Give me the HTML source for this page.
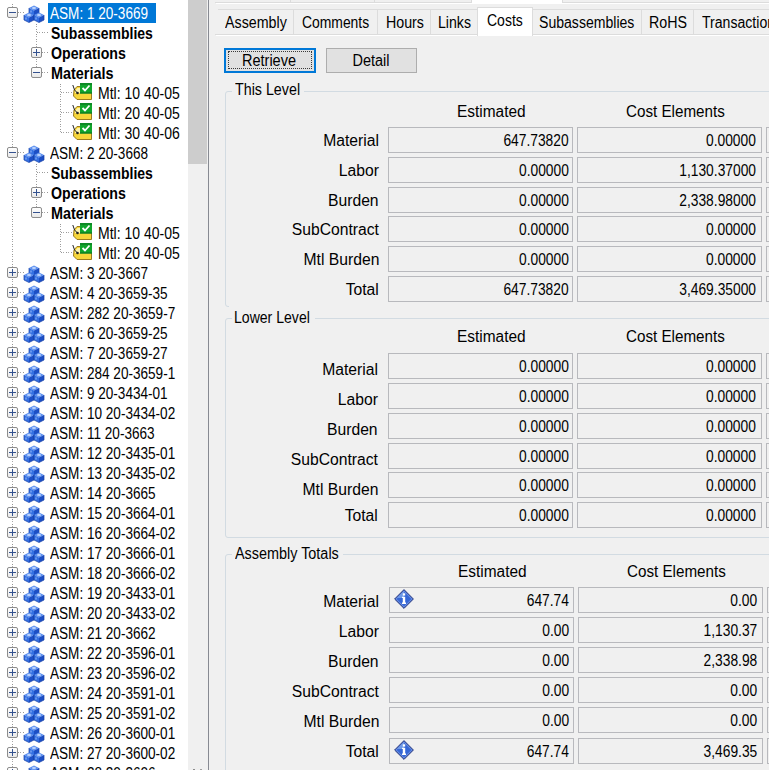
<!DOCTYPE html><html><head><meta charset="utf-8"><style>
html,body{margin:0;padding:0;}
body{width:769px;height:770px;overflow:hidden;position:relative;background:#f0f0f0;font-family:"Liberation Sans", sans-serif;color:#000;}
.t{position:absolute;line-height:20px;white-space:nowrap;}
.a{position:absolute;}
svg{position:absolute;overflow:visible;}
</style></head><body>
<div style="position:absolute;left:0px;top:0px;width:188px;height:770px;background:#fff"></div>
<div class="a" style="left:12px;top:4px;width:1px;height:767px;background:repeating-linear-gradient(to bottom,#969696 0,#969696 1px,transparent 1px,transparent 2px,#a8a8a8 2px,#a8a8a8 3px,transparent 3px,transparent 5px)"></div>
<div class="a" style="left:36px;top:24px;width:1px;height:49px;background:repeating-linear-gradient(to bottom,#969696 0,#969696 1px,transparent 1px,transparent 2px,#a8a8a8 2px,#a8a8a8 3px,transparent 3px,transparent 5px)"></div>
<div class="a" style="left:60px;top:84px;width:1px;height:49px;background:repeating-linear-gradient(to bottom,#969696 0,#969696 1px,transparent 1px,transparent 2px,#a8a8a8 2px,#a8a8a8 3px,transparent 3px,transparent 5px)"></div>
<div class="a" style="left:36px;top:164px;width:1px;height:49px;background:repeating-linear-gradient(to bottom,#969696 0,#969696 1px,transparent 1px,transparent 2px,#a8a8a8 2px,#a8a8a8 3px,transparent 3px,transparent 5px)"></div>
<div class="a" style="left:60px;top:224px;width:1px;height:29px;background:repeating-linear-gradient(to bottom,#969696 0,#969696 1px,transparent 1px,transparent 2px,#a8a8a8 2px,#a8a8a8 3px,transparent 3px,transparent 5px)"></div>
<div style="position:absolute;left:7px;top:7px;width:11px;height:11px;background:#fff"></div>
<div class="a" style="left:18px;top:12px;width:6px;height:1px;background:repeating-linear-gradient(to right,#969696 0,#969696 1px,transparent 1px,transparent 2px,#a8a8a8 2px,#a8a8a8 3px,transparent 3px,transparent 5px)"></div>
<div class="a" style="left:7px;top:7px;width:9px;height:9px;border:1px solid #8c8c8c;border-radius:2px;background:linear-gradient(#ffffff,#e8e8e8)"></div>
<div style="position:absolute;left:9px;top:12px;width:7px;height:1px;background:#34528f"></div>
<svg style="left:24px;top:5px" width="20" height="18" viewBox="0 0 20 18"><path d="M10 0.5 L15 3.0 L10 5.5 L5 3.0Z" fill="#5b8ff0"/><path d="M5 3.0 L10 5.5 L10 10.5 L5 8.0Z" fill="#3470e2"/><path d="M15 3.0 L10 5.5 L10 10.5 L15 8.0Z" fill="#1c4fc6"/><path d="M5 3.0 L5 8.0 L10 10.5 L15 8.0 L15 3.0" fill="none" stroke="#1740a6" stroke-width="0.7"/><path d="M8 3.0 L12 3.0 M10 1.8 L10 4.2" stroke="#d8e6ff" stroke-width="1"/><path d="M7 5.5 L7 7.5" stroke="#9dbcf7" stroke-width="1"/><path d="M5 7.5 L10 10.0 L5 12.5 L0 10.0Z" fill="#5b8ff0"/><path d="M0 10.0 L5 12.5 L5 17.5 L0 15.0Z" fill="#3470e2"/><path d="M10 10.0 L5 12.5 L5 17.5 L10 15.0Z" fill="#1c4fc6"/><path d="M0 10.0 L0 15.0 L5 17.5 L10 15.0 L10 10.0" fill="none" stroke="#1740a6" stroke-width="0.7"/><path d="M3 10.0 L7 10.0 M5 8.8 L5 11.2" stroke="#d8e6ff" stroke-width="1"/><path d="M2 12.5 L2 14.5" stroke="#9dbcf7" stroke-width="1"/><path d="M15 7.5 L20 10.0 L15 12.5 L10 10.0Z" fill="#5b8ff0"/><path d="M10 10.0 L15 12.5 L15 17.5 L10 15.0Z" fill="#3470e2"/><path d="M20 10.0 L15 12.5 L15 17.5 L20 15.0Z" fill="#1c4fc6"/><path d="M10 10.0 L10 15.0 L15 17.5 L20 15.0 L20 10.0" fill="none" stroke="#1740a6" stroke-width="0.7"/><path d="M13 10.0 L17 10.0 M15 8.8 L15 11.2" stroke="#d8e6ff" stroke-width="1"/><path d="M12 12.5 L12 14.5" stroke="#9dbcf7" stroke-width="1"/></svg>
<div style="position:absolute;left:48px;top:3px;width:108px;height:20px;background:#0078d7"></div>
<div class="t" style="top:4px;font-size:16px;color:#fff;left:50px;transform:scaleX(0.848);transform-origin:0 0;">ASM: 1 20-3669</div>
<div class="a" style="left:37px;top:32px;width:11px;height:1px;background:repeating-linear-gradient(to right,#969696 0,#969696 1px,transparent 1px,transparent 2px,#a8a8a8 2px,#a8a8a8 3px,transparent 3px,transparent 5px)"></div>
<div class="t" style="top:24px;font-size:16px;font-weight:bold;left:51px;transform:scaleX(0.874);transform-origin:0 0;">Subassemblies</div>
<div style="position:absolute;left:31px;top:47px;width:11px;height:11px;background:#fff"></div>
<div class="a" style="left:42px;top:52px;width:6px;height:1px;background:repeating-linear-gradient(to right,#969696 0,#969696 1px,transparent 1px,transparent 2px,#a8a8a8 2px,#a8a8a8 3px,transparent 3px,transparent 5px)"></div>
<div class="a" style="left:31px;top:47px;width:9px;height:9px;border:1px solid #8c8c8c;border-radius:2px;background:linear-gradient(#ffffff,#e8e8e8)"></div>
<div style="position:absolute;left:33px;top:52px;width:7px;height:1px;background:#34528f"></div>
<div style="position:absolute;left:36px;top:49px;width:1px;height:7px;background:#34528f"></div>
<div class="t" style="top:44px;font-size:16px;font-weight:bold;left:51px;transform:scaleX(0.886);transform-origin:0 0;">Operations</div>
<div style="position:absolute;left:31px;top:67px;width:11px;height:11px;background:#fff"></div>
<div class="a" style="left:42px;top:72px;width:6px;height:1px;background:repeating-linear-gradient(to right,#969696 0,#969696 1px,transparent 1px,transparent 2px,#a8a8a8 2px,#a8a8a8 3px,transparent 3px,transparent 5px)"></div>
<div class="a" style="left:31px;top:67px;width:9px;height:9px;border:1px solid #8c8c8c;border-radius:2px;background:linear-gradient(#ffffff,#e8e8e8)"></div>
<div style="position:absolute;left:33px;top:72px;width:7px;height:1px;background:#34528f"></div>
<div class="t" style="top:64px;font-size:16px;font-weight:bold;left:51px;transform:scaleX(0.9);transform-origin:0 0;">Materials</div>
<div class="a" style="left:61px;top:92px;width:11px;height:1px;background:repeating-linear-gradient(to right,#969696 0,#969696 1px,transparent 1px,transparent 2px,#a8a8a8 2px,#a8a8a8 3px,transparent 3px,transparent 5px)"></div>
<svg style="left:72px;top:82px" width="20" height="18" viewBox="0 0 20 18"><path d="M2 8 L5 4.5 L19.5 4.5 L19.5 17.5 L5 17.5 L1.5 14Z" fill="#f7d63a" stroke="#9a7a1e" stroke-width="1"/><path d="M3 9 L5.5 6 L10 6 L10 11 L3 11Z" fill="#fdf3b0"/><circle cx="5.5" cy="11" r="1.3" fill="#222"/><path d="M0.8 3 Q2 9 5.5 11" stroke="#222" stroke-width="1" fill="none"/><rect x="8" y="1" width="12" height="10.5" fill="#10a52c"/><rect x="8" y="1" width="12" height="2" fill="#0d8a25"/><rect x="8" y="10.5" width="12" height="1" fill="#0b6e1d"/><path d="M10.5 6 L13 8.5 L17.5 3.5" stroke="#fff" stroke-width="1.8" fill="none"/></svg>
<div class="t" style="top:84px;font-size:16px;left:98px;transform:scaleX(0.875);transform-origin:0 0;">Mtl: 10 40-05</div>
<div class="a" style="left:61px;top:112px;width:11px;height:1px;background:repeating-linear-gradient(to right,#969696 0,#969696 1px,transparent 1px,transparent 2px,#a8a8a8 2px,#a8a8a8 3px,transparent 3px,transparent 5px)"></div>
<svg style="left:72px;top:102px" width="20" height="18" viewBox="0 0 20 18"><path d="M2 8 L5 4.5 L19.5 4.5 L19.5 17.5 L5 17.5 L1.5 14Z" fill="#f7d63a" stroke="#9a7a1e" stroke-width="1"/><path d="M3 9 L5.5 6 L10 6 L10 11 L3 11Z" fill="#fdf3b0"/><circle cx="5.5" cy="11" r="1.3" fill="#222"/><path d="M0.8 3 Q2 9 5.5 11" stroke="#222" stroke-width="1" fill="none"/><rect x="8" y="1" width="12" height="10.5" fill="#10a52c"/><rect x="8" y="1" width="12" height="2" fill="#0d8a25"/><rect x="8" y="10.5" width="12" height="1" fill="#0b6e1d"/><path d="M10.5 6 L13 8.5 L17.5 3.5" stroke="#fff" stroke-width="1.8" fill="none"/></svg>
<div class="t" style="top:104px;font-size:16px;left:98px;transform:scaleX(0.875);transform-origin:0 0;">Mtl: 20 40-05</div>
<div class="a" style="left:61px;top:132px;width:11px;height:1px;background:repeating-linear-gradient(to right,#969696 0,#969696 1px,transparent 1px,transparent 2px,#a8a8a8 2px,#a8a8a8 3px,transparent 3px,transparent 5px)"></div>
<svg style="left:72px;top:122px" width="20" height="18" viewBox="0 0 20 18"><path d="M2 8 L5 4.5 L19.5 4.5 L19.5 17.5 L5 17.5 L1.5 14Z" fill="#f7d63a" stroke="#9a7a1e" stroke-width="1"/><path d="M3 9 L5.5 6 L10 6 L10 11 L3 11Z" fill="#fdf3b0"/><circle cx="5.5" cy="11" r="1.3" fill="#222"/><path d="M0.8 3 Q2 9 5.5 11" stroke="#222" stroke-width="1" fill="none"/><rect x="8" y="1" width="12" height="10.5" fill="#10a52c"/><rect x="8" y="1" width="12" height="2" fill="#0d8a25"/><rect x="8" y="10.5" width="12" height="1" fill="#0b6e1d"/><path d="M10.5 6 L13 8.5 L17.5 3.5" stroke="#fff" stroke-width="1.8" fill="none"/></svg>
<div class="t" style="top:124px;font-size:16px;left:98px;transform:scaleX(0.875);transform-origin:0 0;">Mtl: 30 40-06</div>
<div style="position:absolute;left:7px;top:147px;width:11px;height:11px;background:#fff"></div>
<div class="a" style="left:18px;top:152px;width:6px;height:1px;background:repeating-linear-gradient(to right,#969696 0,#969696 1px,transparent 1px,transparent 2px,#a8a8a8 2px,#a8a8a8 3px,transparent 3px,transparent 5px)"></div>
<div class="a" style="left:7px;top:147px;width:9px;height:9px;border:1px solid #8c8c8c;border-radius:2px;background:linear-gradient(#ffffff,#e8e8e8)"></div>
<div style="position:absolute;left:9px;top:152px;width:7px;height:1px;background:#34528f"></div>
<svg style="left:24px;top:145px" width="20" height="18" viewBox="0 0 20 18"><path d="M10 0.5 L15 3.0 L10 5.5 L5 3.0Z" fill="#5b8ff0"/><path d="M5 3.0 L10 5.5 L10 10.5 L5 8.0Z" fill="#3470e2"/><path d="M15 3.0 L10 5.5 L10 10.5 L15 8.0Z" fill="#1c4fc6"/><path d="M5 3.0 L5 8.0 L10 10.5 L15 8.0 L15 3.0" fill="none" stroke="#1740a6" stroke-width="0.7"/><path d="M8 3.0 L12 3.0 M10 1.8 L10 4.2" stroke="#d8e6ff" stroke-width="1"/><path d="M7 5.5 L7 7.5" stroke="#9dbcf7" stroke-width="1"/><path d="M5 7.5 L10 10.0 L5 12.5 L0 10.0Z" fill="#5b8ff0"/><path d="M0 10.0 L5 12.5 L5 17.5 L0 15.0Z" fill="#3470e2"/><path d="M10 10.0 L5 12.5 L5 17.5 L10 15.0Z" fill="#1c4fc6"/><path d="M0 10.0 L0 15.0 L5 17.5 L10 15.0 L10 10.0" fill="none" stroke="#1740a6" stroke-width="0.7"/><path d="M3 10.0 L7 10.0 M5 8.8 L5 11.2" stroke="#d8e6ff" stroke-width="1"/><path d="M2 12.5 L2 14.5" stroke="#9dbcf7" stroke-width="1"/><path d="M15 7.5 L20 10.0 L15 12.5 L10 10.0Z" fill="#5b8ff0"/><path d="M10 10.0 L15 12.5 L15 17.5 L10 15.0Z" fill="#3470e2"/><path d="M20 10.0 L15 12.5 L15 17.5 L20 15.0Z" fill="#1c4fc6"/><path d="M10 10.0 L10 15.0 L15 17.5 L20 15.0 L20 10.0" fill="none" stroke="#1740a6" stroke-width="0.7"/><path d="M13 10.0 L17 10.0 M15 8.8 L15 11.2" stroke="#d8e6ff" stroke-width="1"/><path d="M12 12.5 L12 14.5" stroke="#9dbcf7" stroke-width="1"/></svg>
<div class="t" style="top:144px;font-size:16px;left:50px;transform:scaleX(0.848);transform-origin:0 0;">ASM: 2 20-3668</div>
<div class="a" style="left:37px;top:172px;width:11px;height:1px;background:repeating-linear-gradient(to right,#969696 0,#969696 1px,transparent 1px,transparent 2px,#a8a8a8 2px,#a8a8a8 3px,transparent 3px,transparent 5px)"></div>
<div class="t" style="top:164px;font-size:16px;font-weight:bold;left:51px;transform:scaleX(0.874);transform-origin:0 0;">Subassemblies</div>
<div style="position:absolute;left:31px;top:187px;width:11px;height:11px;background:#fff"></div>
<div class="a" style="left:42px;top:192px;width:6px;height:1px;background:repeating-linear-gradient(to right,#969696 0,#969696 1px,transparent 1px,transparent 2px,#a8a8a8 2px,#a8a8a8 3px,transparent 3px,transparent 5px)"></div>
<div class="a" style="left:31px;top:187px;width:9px;height:9px;border:1px solid #8c8c8c;border-radius:2px;background:linear-gradient(#ffffff,#e8e8e8)"></div>
<div style="position:absolute;left:33px;top:192px;width:7px;height:1px;background:#34528f"></div>
<div style="position:absolute;left:36px;top:189px;width:1px;height:7px;background:#34528f"></div>
<div class="t" style="top:184px;font-size:16px;font-weight:bold;left:51px;transform:scaleX(0.886);transform-origin:0 0;">Operations</div>
<div style="position:absolute;left:31px;top:207px;width:11px;height:11px;background:#fff"></div>
<div class="a" style="left:42px;top:212px;width:6px;height:1px;background:repeating-linear-gradient(to right,#969696 0,#969696 1px,transparent 1px,transparent 2px,#a8a8a8 2px,#a8a8a8 3px,transparent 3px,transparent 5px)"></div>
<div class="a" style="left:31px;top:207px;width:9px;height:9px;border:1px solid #8c8c8c;border-radius:2px;background:linear-gradient(#ffffff,#e8e8e8)"></div>
<div style="position:absolute;left:33px;top:212px;width:7px;height:1px;background:#34528f"></div>
<div class="t" style="top:204px;font-size:16px;font-weight:bold;left:51px;transform:scaleX(0.9);transform-origin:0 0;">Materials</div>
<div class="a" style="left:61px;top:232px;width:11px;height:1px;background:repeating-linear-gradient(to right,#969696 0,#969696 1px,transparent 1px,transparent 2px,#a8a8a8 2px,#a8a8a8 3px,transparent 3px,transparent 5px)"></div>
<svg style="left:72px;top:222px" width="20" height="18" viewBox="0 0 20 18"><path d="M2 8 L5 4.5 L19.5 4.5 L19.5 17.5 L5 17.5 L1.5 14Z" fill="#f7d63a" stroke="#9a7a1e" stroke-width="1"/><path d="M3 9 L5.5 6 L10 6 L10 11 L3 11Z" fill="#fdf3b0"/><circle cx="5.5" cy="11" r="1.3" fill="#222"/><path d="M0.8 3 Q2 9 5.5 11" stroke="#222" stroke-width="1" fill="none"/><rect x="8" y="1" width="12" height="10.5" fill="#10a52c"/><rect x="8" y="1" width="12" height="2" fill="#0d8a25"/><rect x="8" y="10.5" width="12" height="1" fill="#0b6e1d"/><path d="M10.5 6 L13 8.5 L17.5 3.5" stroke="#fff" stroke-width="1.8" fill="none"/></svg>
<div class="t" style="top:224px;font-size:16px;left:98px;transform:scaleX(0.875);transform-origin:0 0;">Mtl: 10 40-05</div>
<div class="a" style="left:61px;top:252px;width:11px;height:1px;background:repeating-linear-gradient(to right,#969696 0,#969696 1px,transparent 1px,transparent 2px,#a8a8a8 2px,#a8a8a8 3px,transparent 3px,transparent 5px)"></div>
<svg style="left:72px;top:242px" width="20" height="18" viewBox="0 0 20 18"><path d="M2 8 L5 4.5 L19.5 4.5 L19.5 17.5 L5 17.5 L1.5 14Z" fill="#f7d63a" stroke="#9a7a1e" stroke-width="1"/><path d="M3 9 L5.5 6 L10 6 L10 11 L3 11Z" fill="#fdf3b0"/><circle cx="5.5" cy="11" r="1.3" fill="#222"/><path d="M0.8 3 Q2 9 5.5 11" stroke="#222" stroke-width="1" fill="none"/><rect x="8" y="1" width="12" height="10.5" fill="#10a52c"/><rect x="8" y="1" width="12" height="2" fill="#0d8a25"/><rect x="8" y="10.5" width="12" height="1" fill="#0b6e1d"/><path d="M10.5 6 L13 8.5 L17.5 3.5" stroke="#fff" stroke-width="1.8" fill="none"/></svg>
<div class="t" style="top:244px;font-size:16px;left:98px;transform:scaleX(0.875);transform-origin:0 0;">Mtl: 20 40-05</div>
<div style="position:absolute;left:7px;top:267px;width:11px;height:11px;background:#fff"></div>
<div class="a" style="left:18px;top:272px;width:6px;height:1px;background:repeating-linear-gradient(to right,#969696 0,#969696 1px,transparent 1px,transparent 2px,#a8a8a8 2px,#a8a8a8 3px,transparent 3px,transparent 5px)"></div>
<div class="a" style="left:7px;top:267px;width:9px;height:9px;border:1px solid #8c8c8c;border-radius:2px;background:linear-gradient(#ffffff,#e8e8e8)"></div>
<div style="position:absolute;left:9px;top:272px;width:7px;height:1px;background:#34528f"></div>
<div style="position:absolute;left:12px;top:269px;width:1px;height:7px;background:#34528f"></div>
<svg style="left:24px;top:265px" width="20" height="18" viewBox="0 0 20 18"><path d="M10 0.5 L15 3.0 L10 5.5 L5 3.0Z" fill="#5b8ff0"/><path d="M5 3.0 L10 5.5 L10 10.5 L5 8.0Z" fill="#3470e2"/><path d="M15 3.0 L10 5.5 L10 10.5 L15 8.0Z" fill="#1c4fc6"/><path d="M5 3.0 L5 8.0 L10 10.5 L15 8.0 L15 3.0" fill="none" stroke="#1740a6" stroke-width="0.7"/><path d="M8 3.0 L12 3.0 M10 1.8 L10 4.2" stroke="#d8e6ff" stroke-width="1"/><path d="M7 5.5 L7 7.5" stroke="#9dbcf7" stroke-width="1"/><path d="M5 7.5 L10 10.0 L5 12.5 L0 10.0Z" fill="#5b8ff0"/><path d="M0 10.0 L5 12.5 L5 17.5 L0 15.0Z" fill="#3470e2"/><path d="M10 10.0 L5 12.5 L5 17.5 L10 15.0Z" fill="#1c4fc6"/><path d="M0 10.0 L0 15.0 L5 17.5 L10 15.0 L10 10.0" fill="none" stroke="#1740a6" stroke-width="0.7"/><path d="M3 10.0 L7 10.0 M5 8.8 L5 11.2" stroke="#d8e6ff" stroke-width="1"/><path d="M2 12.5 L2 14.5" stroke="#9dbcf7" stroke-width="1"/><path d="M15 7.5 L20 10.0 L15 12.5 L10 10.0Z" fill="#5b8ff0"/><path d="M10 10.0 L15 12.5 L15 17.5 L10 15.0Z" fill="#3470e2"/><path d="M20 10.0 L15 12.5 L15 17.5 L20 15.0Z" fill="#1c4fc6"/><path d="M10 10.0 L10 15.0 L15 17.5 L20 15.0 L20 10.0" fill="none" stroke="#1740a6" stroke-width="0.7"/><path d="M13 10.0 L17 10.0 M15 8.8 L15 11.2" stroke="#d8e6ff" stroke-width="1"/><path d="M12 12.5 L12 14.5" stroke="#9dbcf7" stroke-width="1"/></svg>
<div class="t" style="top:264px;font-size:16px;left:50px;transform:scaleX(0.848);transform-origin:0 0;">ASM: 3 20-3667</div>
<div style="position:absolute;left:7px;top:287px;width:11px;height:11px;background:#fff"></div>
<div class="a" style="left:18px;top:292px;width:6px;height:1px;background:repeating-linear-gradient(to right,#969696 0,#969696 1px,transparent 1px,transparent 2px,#a8a8a8 2px,#a8a8a8 3px,transparent 3px,transparent 5px)"></div>
<div class="a" style="left:7px;top:287px;width:9px;height:9px;border:1px solid #8c8c8c;border-radius:2px;background:linear-gradient(#ffffff,#e8e8e8)"></div>
<div style="position:absolute;left:9px;top:292px;width:7px;height:1px;background:#34528f"></div>
<div style="position:absolute;left:12px;top:289px;width:1px;height:7px;background:#34528f"></div>
<svg style="left:24px;top:285px" width="20" height="18" viewBox="0 0 20 18"><path d="M10 0.5 L15 3.0 L10 5.5 L5 3.0Z" fill="#5b8ff0"/><path d="M5 3.0 L10 5.5 L10 10.5 L5 8.0Z" fill="#3470e2"/><path d="M15 3.0 L10 5.5 L10 10.5 L15 8.0Z" fill="#1c4fc6"/><path d="M5 3.0 L5 8.0 L10 10.5 L15 8.0 L15 3.0" fill="none" stroke="#1740a6" stroke-width="0.7"/><path d="M8 3.0 L12 3.0 M10 1.8 L10 4.2" stroke="#d8e6ff" stroke-width="1"/><path d="M7 5.5 L7 7.5" stroke="#9dbcf7" stroke-width="1"/><path d="M5 7.5 L10 10.0 L5 12.5 L0 10.0Z" fill="#5b8ff0"/><path d="M0 10.0 L5 12.5 L5 17.5 L0 15.0Z" fill="#3470e2"/><path d="M10 10.0 L5 12.5 L5 17.5 L10 15.0Z" fill="#1c4fc6"/><path d="M0 10.0 L0 15.0 L5 17.5 L10 15.0 L10 10.0" fill="none" stroke="#1740a6" stroke-width="0.7"/><path d="M3 10.0 L7 10.0 M5 8.8 L5 11.2" stroke="#d8e6ff" stroke-width="1"/><path d="M2 12.5 L2 14.5" stroke="#9dbcf7" stroke-width="1"/><path d="M15 7.5 L20 10.0 L15 12.5 L10 10.0Z" fill="#5b8ff0"/><path d="M10 10.0 L15 12.5 L15 17.5 L10 15.0Z" fill="#3470e2"/><path d="M20 10.0 L15 12.5 L15 17.5 L20 15.0Z" fill="#1c4fc6"/><path d="M10 10.0 L10 15.0 L15 17.5 L20 15.0 L20 10.0" fill="none" stroke="#1740a6" stroke-width="0.7"/><path d="M13 10.0 L17 10.0 M15 8.8 L15 11.2" stroke="#d8e6ff" stroke-width="1"/><path d="M12 12.5 L12 14.5" stroke="#9dbcf7" stroke-width="1"/></svg>
<div class="t" style="top:284px;font-size:16px;left:50px;transform:scaleX(0.848);transform-origin:0 0;">ASM: 4 20-3659-35</div>
<div style="position:absolute;left:7px;top:307px;width:11px;height:11px;background:#fff"></div>
<div class="a" style="left:18px;top:312px;width:6px;height:1px;background:repeating-linear-gradient(to right,#969696 0,#969696 1px,transparent 1px,transparent 2px,#a8a8a8 2px,#a8a8a8 3px,transparent 3px,transparent 5px)"></div>
<div class="a" style="left:7px;top:307px;width:9px;height:9px;border:1px solid #8c8c8c;border-radius:2px;background:linear-gradient(#ffffff,#e8e8e8)"></div>
<div style="position:absolute;left:9px;top:312px;width:7px;height:1px;background:#34528f"></div>
<div style="position:absolute;left:12px;top:309px;width:1px;height:7px;background:#34528f"></div>
<svg style="left:24px;top:305px" width="20" height="18" viewBox="0 0 20 18"><path d="M10 0.5 L15 3.0 L10 5.5 L5 3.0Z" fill="#5b8ff0"/><path d="M5 3.0 L10 5.5 L10 10.5 L5 8.0Z" fill="#3470e2"/><path d="M15 3.0 L10 5.5 L10 10.5 L15 8.0Z" fill="#1c4fc6"/><path d="M5 3.0 L5 8.0 L10 10.5 L15 8.0 L15 3.0" fill="none" stroke="#1740a6" stroke-width="0.7"/><path d="M8 3.0 L12 3.0 M10 1.8 L10 4.2" stroke="#d8e6ff" stroke-width="1"/><path d="M7 5.5 L7 7.5" stroke="#9dbcf7" stroke-width="1"/><path d="M5 7.5 L10 10.0 L5 12.5 L0 10.0Z" fill="#5b8ff0"/><path d="M0 10.0 L5 12.5 L5 17.5 L0 15.0Z" fill="#3470e2"/><path d="M10 10.0 L5 12.5 L5 17.5 L10 15.0Z" fill="#1c4fc6"/><path d="M0 10.0 L0 15.0 L5 17.5 L10 15.0 L10 10.0" fill="none" stroke="#1740a6" stroke-width="0.7"/><path d="M3 10.0 L7 10.0 M5 8.8 L5 11.2" stroke="#d8e6ff" stroke-width="1"/><path d="M2 12.5 L2 14.5" stroke="#9dbcf7" stroke-width="1"/><path d="M15 7.5 L20 10.0 L15 12.5 L10 10.0Z" fill="#5b8ff0"/><path d="M10 10.0 L15 12.5 L15 17.5 L10 15.0Z" fill="#3470e2"/><path d="M20 10.0 L15 12.5 L15 17.5 L20 15.0Z" fill="#1c4fc6"/><path d="M10 10.0 L10 15.0 L15 17.5 L20 15.0 L20 10.0" fill="none" stroke="#1740a6" stroke-width="0.7"/><path d="M13 10.0 L17 10.0 M15 8.8 L15 11.2" stroke="#d8e6ff" stroke-width="1"/><path d="M12 12.5 L12 14.5" stroke="#9dbcf7" stroke-width="1"/></svg>
<div class="t" style="top:304px;font-size:16px;left:50px;transform:scaleX(0.848);transform-origin:0 0;">ASM: 282 20-3659-7</div>
<div style="position:absolute;left:7px;top:327px;width:11px;height:11px;background:#fff"></div>
<div class="a" style="left:18px;top:332px;width:6px;height:1px;background:repeating-linear-gradient(to right,#969696 0,#969696 1px,transparent 1px,transparent 2px,#a8a8a8 2px,#a8a8a8 3px,transparent 3px,transparent 5px)"></div>
<div class="a" style="left:7px;top:327px;width:9px;height:9px;border:1px solid #8c8c8c;border-radius:2px;background:linear-gradient(#ffffff,#e8e8e8)"></div>
<div style="position:absolute;left:9px;top:332px;width:7px;height:1px;background:#34528f"></div>
<div style="position:absolute;left:12px;top:329px;width:1px;height:7px;background:#34528f"></div>
<svg style="left:24px;top:325px" width="20" height="18" viewBox="0 0 20 18"><path d="M10 0.5 L15 3.0 L10 5.5 L5 3.0Z" fill="#5b8ff0"/><path d="M5 3.0 L10 5.5 L10 10.5 L5 8.0Z" fill="#3470e2"/><path d="M15 3.0 L10 5.5 L10 10.5 L15 8.0Z" fill="#1c4fc6"/><path d="M5 3.0 L5 8.0 L10 10.5 L15 8.0 L15 3.0" fill="none" stroke="#1740a6" stroke-width="0.7"/><path d="M8 3.0 L12 3.0 M10 1.8 L10 4.2" stroke="#d8e6ff" stroke-width="1"/><path d="M7 5.5 L7 7.5" stroke="#9dbcf7" stroke-width="1"/><path d="M5 7.5 L10 10.0 L5 12.5 L0 10.0Z" fill="#5b8ff0"/><path d="M0 10.0 L5 12.5 L5 17.5 L0 15.0Z" fill="#3470e2"/><path d="M10 10.0 L5 12.5 L5 17.5 L10 15.0Z" fill="#1c4fc6"/><path d="M0 10.0 L0 15.0 L5 17.5 L10 15.0 L10 10.0" fill="none" stroke="#1740a6" stroke-width="0.7"/><path d="M3 10.0 L7 10.0 M5 8.8 L5 11.2" stroke="#d8e6ff" stroke-width="1"/><path d="M2 12.5 L2 14.5" stroke="#9dbcf7" stroke-width="1"/><path d="M15 7.5 L20 10.0 L15 12.5 L10 10.0Z" fill="#5b8ff0"/><path d="M10 10.0 L15 12.5 L15 17.5 L10 15.0Z" fill="#3470e2"/><path d="M20 10.0 L15 12.5 L15 17.5 L20 15.0Z" fill="#1c4fc6"/><path d="M10 10.0 L10 15.0 L15 17.5 L20 15.0 L20 10.0" fill="none" stroke="#1740a6" stroke-width="0.7"/><path d="M13 10.0 L17 10.0 M15 8.8 L15 11.2" stroke="#d8e6ff" stroke-width="1"/><path d="M12 12.5 L12 14.5" stroke="#9dbcf7" stroke-width="1"/></svg>
<div class="t" style="top:324px;font-size:16px;left:50px;transform:scaleX(0.848);transform-origin:0 0;">ASM: 6 20-3659-25</div>
<div style="position:absolute;left:7px;top:347px;width:11px;height:11px;background:#fff"></div>
<div class="a" style="left:18px;top:352px;width:6px;height:1px;background:repeating-linear-gradient(to right,#969696 0,#969696 1px,transparent 1px,transparent 2px,#a8a8a8 2px,#a8a8a8 3px,transparent 3px,transparent 5px)"></div>
<div class="a" style="left:7px;top:347px;width:9px;height:9px;border:1px solid #8c8c8c;border-radius:2px;background:linear-gradient(#ffffff,#e8e8e8)"></div>
<div style="position:absolute;left:9px;top:352px;width:7px;height:1px;background:#34528f"></div>
<div style="position:absolute;left:12px;top:349px;width:1px;height:7px;background:#34528f"></div>
<svg style="left:24px;top:345px" width="20" height="18" viewBox="0 0 20 18"><path d="M10 0.5 L15 3.0 L10 5.5 L5 3.0Z" fill="#5b8ff0"/><path d="M5 3.0 L10 5.5 L10 10.5 L5 8.0Z" fill="#3470e2"/><path d="M15 3.0 L10 5.5 L10 10.5 L15 8.0Z" fill="#1c4fc6"/><path d="M5 3.0 L5 8.0 L10 10.5 L15 8.0 L15 3.0" fill="none" stroke="#1740a6" stroke-width="0.7"/><path d="M8 3.0 L12 3.0 M10 1.8 L10 4.2" stroke="#d8e6ff" stroke-width="1"/><path d="M7 5.5 L7 7.5" stroke="#9dbcf7" stroke-width="1"/><path d="M5 7.5 L10 10.0 L5 12.5 L0 10.0Z" fill="#5b8ff0"/><path d="M0 10.0 L5 12.5 L5 17.5 L0 15.0Z" fill="#3470e2"/><path d="M10 10.0 L5 12.5 L5 17.5 L10 15.0Z" fill="#1c4fc6"/><path d="M0 10.0 L0 15.0 L5 17.5 L10 15.0 L10 10.0" fill="none" stroke="#1740a6" stroke-width="0.7"/><path d="M3 10.0 L7 10.0 M5 8.8 L5 11.2" stroke="#d8e6ff" stroke-width="1"/><path d="M2 12.5 L2 14.5" stroke="#9dbcf7" stroke-width="1"/><path d="M15 7.5 L20 10.0 L15 12.5 L10 10.0Z" fill="#5b8ff0"/><path d="M10 10.0 L15 12.5 L15 17.5 L10 15.0Z" fill="#3470e2"/><path d="M20 10.0 L15 12.5 L15 17.5 L20 15.0Z" fill="#1c4fc6"/><path d="M10 10.0 L10 15.0 L15 17.5 L20 15.0 L20 10.0" fill="none" stroke="#1740a6" stroke-width="0.7"/><path d="M13 10.0 L17 10.0 M15 8.8 L15 11.2" stroke="#d8e6ff" stroke-width="1"/><path d="M12 12.5 L12 14.5" stroke="#9dbcf7" stroke-width="1"/></svg>
<div class="t" style="top:344px;font-size:16px;left:50px;transform:scaleX(0.848);transform-origin:0 0;">ASM: 7 20-3659-27</div>
<div style="position:absolute;left:7px;top:367px;width:11px;height:11px;background:#fff"></div>
<div class="a" style="left:18px;top:372px;width:6px;height:1px;background:repeating-linear-gradient(to right,#969696 0,#969696 1px,transparent 1px,transparent 2px,#a8a8a8 2px,#a8a8a8 3px,transparent 3px,transparent 5px)"></div>
<div class="a" style="left:7px;top:367px;width:9px;height:9px;border:1px solid #8c8c8c;border-radius:2px;background:linear-gradient(#ffffff,#e8e8e8)"></div>
<div style="position:absolute;left:9px;top:372px;width:7px;height:1px;background:#34528f"></div>
<div style="position:absolute;left:12px;top:369px;width:1px;height:7px;background:#34528f"></div>
<svg style="left:24px;top:365px" width="20" height="18" viewBox="0 0 20 18"><path d="M10 0.5 L15 3.0 L10 5.5 L5 3.0Z" fill="#5b8ff0"/><path d="M5 3.0 L10 5.5 L10 10.5 L5 8.0Z" fill="#3470e2"/><path d="M15 3.0 L10 5.5 L10 10.5 L15 8.0Z" fill="#1c4fc6"/><path d="M5 3.0 L5 8.0 L10 10.5 L15 8.0 L15 3.0" fill="none" stroke="#1740a6" stroke-width="0.7"/><path d="M8 3.0 L12 3.0 M10 1.8 L10 4.2" stroke="#d8e6ff" stroke-width="1"/><path d="M7 5.5 L7 7.5" stroke="#9dbcf7" stroke-width="1"/><path d="M5 7.5 L10 10.0 L5 12.5 L0 10.0Z" fill="#5b8ff0"/><path d="M0 10.0 L5 12.5 L5 17.5 L0 15.0Z" fill="#3470e2"/><path d="M10 10.0 L5 12.5 L5 17.5 L10 15.0Z" fill="#1c4fc6"/><path d="M0 10.0 L0 15.0 L5 17.5 L10 15.0 L10 10.0" fill="none" stroke="#1740a6" stroke-width="0.7"/><path d="M3 10.0 L7 10.0 M5 8.8 L5 11.2" stroke="#d8e6ff" stroke-width="1"/><path d="M2 12.5 L2 14.5" stroke="#9dbcf7" stroke-width="1"/><path d="M15 7.5 L20 10.0 L15 12.5 L10 10.0Z" fill="#5b8ff0"/><path d="M10 10.0 L15 12.5 L15 17.5 L10 15.0Z" fill="#3470e2"/><path d="M20 10.0 L15 12.5 L15 17.5 L20 15.0Z" fill="#1c4fc6"/><path d="M10 10.0 L10 15.0 L15 17.5 L20 15.0 L20 10.0" fill="none" stroke="#1740a6" stroke-width="0.7"/><path d="M13 10.0 L17 10.0 M15 8.8 L15 11.2" stroke="#d8e6ff" stroke-width="1"/><path d="M12 12.5 L12 14.5" stroke="#9dbcf7" stroke-width="1"/></svg>
<div class="t" style="top:364px;font-size:16px;left:50px;transform:scaleX(0.848);transform-origin:0 0;">ASM: 284 20-3659-1</div>
<div style="position:absolute;left:7px;top:387px;width:11px;height:11px;background:#fff"></div>
<div class="a" style="left:18px;top:392px;width:6px;height:1px;background:repeating-linear-gradient(to right,#969696 0,#969696 1px,transparent 1px,transparent 2px,#a8a8a8 2px,#a8a8a8 3px,transparent 3px,transparent 5px)"></div>
<div class="a" style="left:7px;top:387px;width:9px;height:9px;border:1px solid #8c8c8c;border-radius:2px;background:linear-gradient(#ffffff,#e8e8e8)"></div>
<div style="position:absolute;left:9px;top:392px;width:7px;height:1px;background:#34528f"></div>
<div style="position:absolute;left:12px;top:389px;width:1px;height:7px;background:#34528f"></div>
<svg style="left:24px;top:385px" width="20" height="18" viewBox="0 0 20 18"><path d="M10 0.5 L15 3.0 L10 5.5 L5 3.0Z" fill="#5b8ff0"/><path d="M5 3.0 L10 5.5 L10 10.5 L5 8.0Z" fill="#3470e2"/><path d="M15 3.0 L10 5.5 L10 10.5 L15 8.0Z" fill="#1c4fc6"/><path d="M5 3.0 L5 8.0 L10 10.5 L15 8.0 L15 3.0" fill="none" stroke="#1740a6" stroke-width="0.7"/><path d="M8 3.0 L12 3.0 M10 1.8 L10 4.2" stroke="#d8e6ff" stroke-width="1"/><path d="M7 5.5 L7 7.5" stroke="#9dbcf7" stroke-width="1"/><path d="M5 7.5 L10 10.0 L5 12.5 L0 10.0Z" fill="#5b8ff0"/><path d="M0 10.0 L5 12.5 L5 17.5 L0 15.0Z" fill="#3470e2"/><path d="M10 10.0 L5 12.5 L5 17.5 L10 15.0Z" fill="#1c4fc6"/><path d="M0 10.0 L0 15.0 L5 17.5 L10 15.0 L10 10.0" fill="none" stroke="#1740a6" stroke-width="0.7"/><path d="M3 10.0 L7 10.0 M5 8.8 L5 11.2" stroke="#d8e6ff" stroke-width="1"/><path d="M2 12.5 L2 14.5" stroke="#9dbcf7" stroke-width="1"/><path d="M15 7.5 L20 10.0 L15 12.5 L10 10.0Z" fill="#5b8ff0"/><path d="M10 10.0 L15 12.5 L15 17.5 L10 15.0Z" fill="#3470e2"/><path d="M20 10.0 L15 12.5 L15 17.5 L20 15.0Z" fill="#1c4fc6"/><path d="M10 10.0 L10 15.0 L15 17.5 L20 15.0 L20 10.0" fill="none" stroke="#1740a6" stroke-width="0.7"/><path d="M13 10.0 L17 10.0 M15 8.8 L15 11.2" stroke="#d8e6ff" stroke-width="1"/><path d="M12 12.5 L12 14.5" stroke="#9dbcf7" stroke-width="1"/></svg>
<div class="t" style="top:384px;font-size:16px;left:50px;transform:scaleX(0.848);transform-origin:0 0;">ASM: 9 20-3434-01</div>
<div style="position:absolute;left:7px;top:407px;width:11px;height:11px;background:#fff"></div>
<div class="a" style="left:18px;top:412px;width:6px;height:1px;background:repeating-linear-gradient(to right,#969696 0,#969696 1px,transparent 1px,transparent 2px,#a8a8a8 2px,#a8a8a8 3px,transparent 3px,transparent 5px)"></div>
<div class="a" style="left:7px;top:407px;width:9px;height:9px;border:1px solid #8c8c8c;border-radius:2px;background:linear-gradient(#ffffff,#e8e8e8)"></div>
<div style="position:absolute;left:9px;top:412px;width:7px;height:1px;background:#34528f"></div>
<div style="position:absolute;left:12px;top:409px;width:1px;height:7px;background:#34528f"></div>
<svg style="left:24px;top:405px" width="20" height="18" viewBox="0 0 20 18"><path d="M10 0.5 L15 3.0 L10 5.5 L5 3.0Z" fill="#5b8ff0"/><path d="M5 3.0 L10 5.5 L10 10.5 L5 8.0Z" fill="#3470e2"/><path d="M15 3.0 L10 5.5 L10 10.5 L15 8.0Z" fill="#1c4fc6"/><path d="M5 3.0 L5 8.0 L10 10.5 L15 8.0 L15 3.0" fill="none" stroke="#1740a6" stroke-width="0.7"/><path d="M8 3.0 L12 3.0 M10 1.8 L10 4.2" stroke="#d8e6ff" stroke-width="1"/><path d="M7 5.5 L7 7.5" stroke="#9dbcf7" stroke-width="1"/><path d="M5 7.5 L10 10.0 L5 12.5 L0 10.0Z" fill="#5b8ff0"/><path d="M0 10.0 L5 12.5 L5 17.5 L0 15.0Z" fill="#3470e2"/><path d="M10 10.0 L5 12.5 L5 17.5 L10 15.0Z" fill="#1c4fc6"/><path d="M0 10.0 L0 15.0 L5 17.5 L10 15.0 L10 10.0" fill="none" stroke="#1740a6" stroke-width="0.7"/><path d="M3 10.0 L7 10.0 M5 8.8 L5 11.2" stroke="#d8e6ff" stroke-width="1"/><path d="M2 12.5 L2 14.5" stroke="#9dbcf7" stroke-width="1"/><path d="M15 7.5 L20 10.0 L15 12.5 L10 10.0Z" fill="#5b8ff0"/><path d="M10 10.0 L15 12.5 L15 17.5 L10 15.0Z" fill="#3470e2"/><path d="M20 10.0 L15 12.5 L15 17.5 L20 15.0Z" fill="#1c4fc6"/><path d="M10 10.0 L10 15.0 L15 17.5 L20 15.0 L20 10.0" fill="none" stroke="#1740a6" stroke-width="0.7"/><path d="M13 10.0 L17 10.0 M15 8.8 L15 11.2" stroke="#d8e6ff" stroke-width="1"/><path d="M12 12.5 L12 14.5" stroke="#9dbcf7" stroke-width="1"/></svg>
<div class="t" style="top:404px;font-size:16px;left:50px;transform:scaleX(0.848);transform-origin:0 0;">ASM: 10 20-3434-02</div>
<div style="position:absolute;left:7px;top:427px;width:11px;height:11px;background:#fff"></div>
<div class="a" style="left:18px;top:432px;width:6px;height:1px;background:repeating-linear-gradient(to right,#969696 0,#969696 1px,transparent 1px,transparent 2px,#a8a8a8 2px,#a8a8a8 3px,transparent 3px,transparent 5px)"></div>
<div class="a" style="left:7px;top:427px;width:9px;height:9px;border:1px solid #8c8c8c;border-radius:2px;background:linear-gradient(#ffffff,#e8e8e8)"></div>
<div style="position:absolute;left:9px;top:432px;width:7px;height:1px;background:#34528f"></div>
<div style="position:absolute;left:12px;top:429px;width:1px;height:7px;background:#34528f"></div>
<svg style="left:24px;top:425px" width="20" height="18" viewBox="0 0 20 18"><path d="M10 0.5 L15 3.0 L10 5.5 L5 3.0Z" fill="#5b8ff0"/><path d="M5 3.0 L10 5.5 L10 10.5 L5 8.0Z" fill="#3470e2"/><path d="M15 3.0 L10 5.5 L10 10.5 L15 8.0Z" fill="#1c4fc6"/><path d="M5 3.0 L5 8.0 L10 10.5 L15 8.0 L15 3.0" fill="none" stroke="#1740a6" stroke-width="0.7"/><path d="M8 3.0 L12 3.0 M10 1.8 L10 4.2" stroke="#d8e6ff" stroke-width="1"/><path d="M7 5.5 L7 7.5" stroke="#9dbcf7" stroke-width="1"/><path d="M5 7.5 L10 10.0 L5 12.5 L0 10.0Z" fill="#5b8ff0"/><path d="M0 10.0 L5 12.5 L5 17.5 L0 15.0Z" fill="#3470e2"/><path d="M10 10.0 L5 12.5 L5 17.5 L10 15.0Z" fill="#1c4fc6"/><path d="M0 10.0 L0 15.0 L5 17.5 L10 15.0 L10 10.0" fill="none" stroke="#1740a6" stroke-width="0.7"/><path d="M3 10.0 L7 10.0 M5 8.8 L5 11.2" stroke="#d8e6ff" stroke-width="1"/><path d="M2 12.5 L2 14.5" stroke="#9dbcf7" stroke-width="1"/><path d="M15 7.5 L20 10.0 L15 12.5 L10 10.0Z" fill="#5b8ff0"/><path d="M10 10.0 L15 12.5 L15 17.5 L10 15.0Z" fill="#3470e2"/><path d="M20 10.0 L15 12.5 L15 17.5 L20 15.0Z" fill="#1c4fc6"/><path d="M10 10.0 L10 15.0 L15 17.5 L20 15.0 L20 10.0" fill="none" stroke="#1740a6" stroke-width="0.7"/><path d="M13 10.0 L17 10.0 M15 8.8 L15 11.2" stroke="#d8e6ff" stroke-width="1"/><path d="M12 12.5 L12 14.5" stroke="#9dbcf7" stroke-width="1"/></svg>
<div class="t" style="top:424px;font-size:16px;left:50px;transform:scaleX(0.848);transform-origin:0 0;">ASM: 11 20-3663</div>
<div style="position:absolute;left:7px;top:447px;width:11px;height:11px;background:#fff"></div>
<div class="a" style="left:18px;top:452px;width:6px;height:1px;background:repeating-linear-gradient(to right,#969696 0,#969696 1px,transparent 1px,transparent 2px,#a8a8a8 2px,#a8a8a8 3px,transparent 3px,transparent 5px)"></div>
<div class="a" style="left:7px;top:447px;width:9px;height:9px;border:1px solid #8c8c8c;border-radius:2px;background:linear-gradient(#ffffff,#e8e8e8)"></div>
<div style="position:absolute;left:9px;top:452px;width:7px;height:1px;background:#34528f"></div>
<div style="position:absolute;left:12px;top:449px;width:1px;height:7px;background:#34528f"></div>
<svg style="left:24px;top:445px" width="20" height="18" viewBox="0 0 20 18"><path d="M10 0.5 L15 3.0 L10 5.5 L5 3.0Z" fill="#5b8ff0"/><path d="M5 3.0 L10 5.5 L10 10.5 L5 8.0Z" fill="#3470e2"/><path d="M15 3.0 L10 5.5 L10 10.5 L15 8.0Z" fill="#1c4fc6"/><path d="M5 3.0 L5 8.0 L10 10.5 L15 8.0 L15 3.0" fill="none" stroke="#1740a6" stroke-width="0.7"/><path d="M8 3.0 L12 3.0 M10 1.8 L10 4.2" stroke="#d8e6ff" stroke-width="1"/><path d="M7 5.5 L7 7.5" stroke="#9dbcf7" stroke-width="1"/><path d="M5 7.5 L10 10.0 L5 12.5 L0 10.0Z" fill="#5b8ff0"/><path d="M0 10.0 L5 12.5 L5 17.5 L0 15.0Z" fill="#3470e2"/><path d="M10 10.0 L5 12.5 L5 17.5 L10 15.0Z" fill="#1c4fc6"/><path d="M0 10.0 L0 15.0 L5 17.5 L10 15.0 L10 10.0" fill="none" stroke="#1740a6" stroke-width="0.7"/><path d="M3 10.0 L7 10.0 M5 8.8 L5 11.2" stroke="#d8e6ff" stroke-width="1"/><path d="M2 12.5 L2 14.5" stroke="#9dbcf7" stroke-width="1"/><path d="M15 7.5 L20 10.0 L15 12.5 L10 10.0Z" fill="#5b8ff0"/><path d="M10 10.0 L15 12.5 L15 17.5 L10 15.0Z" fill="#3470e2"/><path d="M20 10.0 L15 12.5 L15 17.5 L20 15.0Z" fill="#1c4fc6"/><path d="M10 10.0 L10 15.0 L15 17.5 L20 15.0 L20 10.0" fill="none" stroke="#1740a6" stroke-width="0.7"/><path d="M13 10.0 L17 10.0 M15 8.8 L15 11.2" stroke="#d8e6ff" stroke-width="1"/><path d="M12 12.5 L12 14.5" stroke="#9dbcf7" stroke-width="1"/></svg>
<div class="t" style="top:444px;font-size:16px;left:50px;transform:scaleX(0.848);transform-origin:0 0;">ASM: 12 20-3435-01</div>
<div style="position:absolute;left:7px;top:467px;width:11px;height:11px;background:#fff"></div>
<div class="a" style="left:18px;top:472px;width:6px;height:1px;background:repeating-linear-gradient(to right,#969696 0,#969696 1px,transparent 1px,transparent 2px,#a8a8a8 2px,#a8a8a8 3px,transparent 3px,transparent 5px)"></div>
<div class="a" style="left:7px;top:467px;width:9px;height:9px;border:1px solid #8c8c8c;border-radius:2px;background:linear-gradient(#ffffff,#e8e8e8)"></div>
<div style="position:absolute;left:9px;top:472px;width:7px;height:1px;background:#34528f"></div>
<div style="position:absolute;left:12px;top:469px;width:1px;height:7px;background:#34528f"></div>
<svg style="left:24px;top:465px" width="20" height="18" viewBox="0 0 20 18"><path d="M10 0.5 L15 3.0 L10 5.5 L5 3.0Z" fill="#5b8ff0"/><path d="M5 3.0 L10 5.5 L10 10.5 L5 8.0Z" fill="#3470e2"/><path d="M15 3.0 L10 5.5 L10 10.5 L15 8.0Z" fill="#1c4fc6"/><path d="M5 3.0 L5 8.0 L10 10.5 L15 8.0 L15 3.0" fill="none" stroke="#1740a6" stroke-width="0.7"/><path d="M8 3.0 L12 3.0 M10 1.8 L10 4.2" stroke="#d8e6ff" stroke-width="1"/><path d="M7 5.5 L7 7.5" stroke="#9dbcf7" stroke-width="1"/><path d="M5 7.5 L10 10.0 L5 12.5 L0 10.0Z" fill="#5b8ff0"/><path d="M0 10.0 L5 12.5 L5 17.5 L0 15.0Z" fill="#3470e2"/><path d="M10 10.0 L5 12.5 L5 17.5 L10 15.0Z" fill="#1c4fc6"/><path d="M0 10.0 L0 15.0 L5 17.5 L10 15.0 L10 10.0" fill="none" stroke="#1740a6" stroke-width="0.7"/><path d="M3 10.0 L7 10.0 M5 8.8 L5 11.2" stroke="#d8e6ff" stroke-width="1"/><path d="M2 12.5 L2 14.5" stroke="#9dbcf7" stroke-width="1"/><path d="M15 7.5 L20 10.0 L15 12.5 L10 10.0Z" fill="#5b8ff0"/><path d="M10 10.0 L15 12.5 L15 17.5 L10 15.0Z" fill="#3470e2"/><path d="M20 10.0 L15 12.5 L15 17.5 L20 15.0Z" fill="#1c4fc6"/><path d="M10 10.0 L10 15.0 L15 17.5 L20 15.0 L20 10.0" fill="none" stroke="#1740a6" stroke-width="0.7"/><path d="M13 10.0 L17 10.0 M15 8.8 L15 11.2" stroke="#d8e6ff" stroke-width="1"/><path d="M12 12.5 L12 14.5" stroke="#9dbcf7" stroke-width="1"/></svg>
<div class="t" style="top:464px;font-size:16px;left:50px;transform:scaleX(0.848);transform-origin:0 0;">ASM: 13 20-3435-02</div>
<div style="position:absolute;left:7px;top:487px;width:11px;height:11px;background:#fff"></div>
<div class="a" style="left:18px;top:492px;width:6px;height:1px;background:repeating-linear-gradient(to right,#969696 0,#969696 1px,transparent 1px,transparent 2px,#a8a8a8 2px,#a8a8a8 3px,transparent 3px,transparent 5px)"></div>
<div class="a" style="left:7px;top:487px;width:9px;height:9px;border:1px solid #8c8c8c;border-radius:2px;background:linear-gradient(#ffffff,#e8e8e8)"></div>
<div style="position:absolute;left:9px;top:492px;width:7px;height:1px;background:#34528f"></div>
<div style="position:absolute;left:12px;top:489px;width:1px;height:7px;background:#34528f"></div>
<svg style="left:24px;top:485px" width="20" height="18" viewBox="0 0 20 18"><path d="M10 0.5 L15 3.0 L10 5.5 L5 3.0Z" fill="#5b8ff0"/><path d="M5 3.0 L10 5.5 L10 10.5 L5 8.0Z" fill="#3470e2"/><path d="M15 3.0 L10 5.5 L10 10.5 L15 8.0Z" fill="#1c4fc6"/><path d="M5 3.0 L5 8.0 L10 10.5 L15 8.0 L15 3.0" fill="none" stroke="#1740a6" stroke-width="0.7"/><path d="M8 3.0 L12 3.0 M10 1.8 L10 4.2" stroke="#d8e6ff" stroke-width="1"/><path d="M7 5.5 L7 7.5" stroke="#9dbcf7" stroke-width="1"/><path d="M5 7.5 L10 10.0 L5 12.5 L0 10.0Z" fill="#5b8ff0"/><path d="M0 10.0 L5 12.5 L5 17.5 L0 15.0Z" fill="#3470e2"/><path d="M10 10.0 L5 12.5 L5 17.5 L10 15.0Z" fill="#1c4fc6"/><path d="M0 10.0 L0 15.0 L5 17.5 L10 15.0 L10 10.0" fill="none" stroke="#1740a6" stroke-width="0.7"/><path d="M3 10.0 L7 10.0 M5 8.8 L5 11.2" stroke="#d8e6ff" stroke-width="1"/><path d="M2 12.5 L2 14.5" stroke="#9dbcf7" stroke-width="1"/><path d="M15 7.5 L20 10.0 L15 12.5 L10 10.0Z" fill="#5b8ff0"/><path d="M10 10.0 L15 12.5 L15 17.5 L10 15.0Z" fill="#3470e2"/><path d="M20 10.0 L15 12.5 L15 17.5 L20 15.0Z" fill="#1c4fc6"/><path d="M10 10.0 L10 15.0 L15 17.5 L20 15.0 L20 10.0" fill="none" stroke="#1740a6" stroke-width="0.7"/><path d="M13 10.0 L17 10.0 M15 8.8 L15 11.2" stroke="#d8e6ff" stroke-width="1"/><path d="M12 12.5 L12 14.5" stroke="#9dbcf7" stroke-width="1"/></svg>
<div class="t" style="top:484px;font-size:16px;left:50px;transform:scaleX(0.848);transform-origin:0 0;">ASM: 14 20-3665</div>
<div style="position:absolute;left:7px;top:507px;width:11px;height:11px;background:#fff"></div>
<div class="a" style="left:18px;top:512px;width:6px;height:1px;background:repeating-linear-gradient(to right,#969696 0,#969696 1px,transparent 1px,transparent 2px,#a8a8a8 2px,#a8a8a8 3px,transparent 3px,transparent 5px)"></div>
<div class="a" style="left:7px;top:507px;width:9px;height:9px;border:1px solid #8c8c8c;border-radius:2px;background:linear-gradient(#ffffff,#e8e8e8)"></div>
<div style="position:absolute;left:9px;top:512px;width:7px;height:1px;background:#34528f"></div>
<div style="position:absolute;left:12px;top:509px;width:1px;height:7px;background:#34528f"></div>
<svg style="left:24px;top:505px" width="20" height="18" viewBox="0 0 20 18"><path d="M10 0.5 L15 3.0 L10 5.5 L5 3.0Z" fill="#5b8ff0"/><path d="M5 3.0 L10 5.5 L10 10.5 L5 8.0Z" fill="#3470e2"/><path d="M15 3.0 L10 5.5 L10 10.5 L15 8.0Z" fill="#1c4fc6"/><path d="M5 3.0 L5 8.0 L10 10.5 L15 8.0 L15 3.0" fill="none" stroke="#1740a6" stroke-width="0.7"/><path d="M8 3.0 L12 3.0 M10 1.8 L10 4.2" stroke="#d8e6ff" stroke-width="1"/><path d="M7 5.5 L7 7.5" stroke="#9dbcf7" stroke-width="1"/><path d="M5 7.5 L10 10.0 L5 12.5 L0 10.0Z" fill="#5b8ff0"/><path d="M0 10.0 L5 12.5 L5 17.5 L0 15.0Z" fill="#3470e2"/><path d="M10 10.0 L5 12.5 L5 17.5 L10 15.0Z" fill="#1c4fc6"/><path d="M0 10.0 L0 15.0 L5 17.5 L10 15.0 L10 10.0" fill="none" stroke="#1740a6" stroke-width="0.7"/><path d="M3 10.0 L7 10.0 M5 8.8 L5 11.2" stroke="#d8e6ff" stroke-width="1"/><path d="M2 12.5 L2 14.5" stroke="#9dbcf7" stroke-width="1"/><path d="M15 7.5 L20 10.0 L15 12.5 L10 10.0Z" fill="#5b8ff0"/><path d="M10 10.0 L15 12.5 L15 17.5 L10 15.0Z" fill="#3470e2"/><path d="M20 10.0 L15 12.5 L15 17.5 L20 15.0Z" fill="#1c4fc6"/><path d="M10 10.0 L10 15.0 L15 17.5 L20 15.0 L20 10.0" fill="none" stroke="#1740a6" stroke-width="0.7"/><path d="M13 10.0 L17 10.0 M15 8.8 L15 11.2" stroke="#d8e6ff" stroke-width="1"/><path d="M12 12.5 L12 14.5" stroke="#9dbcf7" stroke-width="1"/></svg>
<div class="t" style="top:504px;font-size:16px;left:50px;transform:scaleX(0.848);transform-origin:0 0;">ASM: 15 20-3664-01</div>
<div style="position:absolute;left:7px;top:527px;width:11px;height:11px;background:#fff"></div>
<div class="a" style="left:18px;top:532px;width:6px;height:1px;background:repeating-linear-gradient(to right,#969696 0,#969696 1px,transparent 1px,transparent 2px,#a8a8a8 2px,#a8a8a8 3px,transparent 3px,transparent 5px)"></div>
<div class="a" style="left:7px;top:527px;width:9px;height:9px;border:1px solid #8c8c8c;border-radius:2px;background:linear-gradient(#ffffff,#e8e8e8)"></div>
<div style="position:absolute;left:9px;top:532px;width:7px;height:1px;background:#34528f"></div>
<div style="position:absolute;left:12px;top:529px;width:1px;height:7px;background:#34528f"></div>
<svg style="left:24px;top:525px" width="20" height="18" viewBox="0 0 20 18"><path d="M10 0.5 L15 3.0 L10 5.5 L5 3.0Z" fill="#5b8ff0"/><path d="M5 3.0 L10 5.5 L10 10.5 L5 8.0Z" fill="#3470e2"/><path d="M15 3.0 L10 5.5 L10 10.5 L15 8.0Z" fill="#1c4fc6"/><path d="M5 3.0 L5 8.0 L10 10.5 L15 8.0 L15 3.0" fill="none" stroke="#1740a6" stroke-width="0.7"/><path d="M8 3.0 L12 3.0 M10 1.8 L10 4.2" stroke="#d8e6ff" stroke-width="1"/><path d="M7 5.5 L7 7.5" stroke="#9dbcf7" stroke-width="1"/><path d="M5 7.5 L10 10.0 L5 12.5 L0 10.0Z" fill="#5b8ff0"/><path d="M0 10.0 L5 12.5 L5 17.5 L0 15.0Z" fill="#3470e2"/><path d="M10 10.0 L5 12.5 L5 17.5 L10 15.0Z" fill="#1c4fc6"/><path d="M0 10.0 L0 15.0 L5 17.5 L10 15.0 L10 10.0" fill="none" stroke="#1740a6" stroke-width="0.7"/><path d="M3 10.0 L7 10.0 M5 8.8 L5 11.2" stroke="#d8e6ff" stroke-width="1"/><path d="M2 12.5 L2 14.5" stroke="#9dbcf7" stroke-width="1"/><path d="M15 7.5 L20 10.0 L15 12.5 L10 10.0Z" fill="#5b8ff0"/><path d="M10 10.0 L15 12.5 L15 17.5 L10 15.0Z" fill="#3470e2"/><path d="M20 10.0 L15 12.5 L15 17.5 L20 15.0Z" fill="#1c4fc6"/><path d="M10 10.0 L10 15.0 L15 17.5 L20 15.0 L20 10.0" fill="none" stroke="#1740a6" stroke-width="0.7"/><path d="M13 10.0 L17 10.0 M15 8.8 L15 11.2" stroke="#d8e6ff" stroke-width="1"/><path d="M12 12.5 L12 14.5" stroke="#9dbcf7" stroke-width="1"/></svg>
<div class="t" style="top:524px;font-size:16px;left:50px;transform:scaleX(0.848);transform-origin:0 0;">ASM: 16 20-3664-02</div>
<div style="position:absolute;left:7px;top:547px;width:11px;height:11px;background:#fff"></div>
<div class="a" style="left:18px;top:552px;width:6px;height:1px;background:repeating-linear-gradient(to right,#969696 0,#969696 1px,transparent 1px,transparent 2px,#a8a8a8 2px,#a8a8a8 3px,transparent 3px,transparent 5px)"></div>
<div class="a" style="left:7px;top:547px;width:9px;height:9px;border:1px solid #8c8c8c;border-radius:2px;background:linear-gradient(#ffffff,#e8e8e8)"></div>
<div style="position:absolute;left:9px;top:552px;width:7px;height:1px;background:#34528f"></div>
<div style="position:absolute;left:12px;top:549px;width:1px;height:7px;background:#34528f"></div>
<svg style="left:24px;top:545px" width="20" height="18" viewBox="0 0 20 18"><path d="M10 0.5 L15 3.0 L10 5.5 L5 3.0Z" fill="#5b8ff0"/><path d="M5 3.0 L10 5.5 L10 10.5 L5 8.0Z" fill="#3470e2"/><path d="M15 3.0 L10 5.5 L10 10.5 L15 8.0Z" fill="#1c4fc6"/><path d="M5 3.0 L5 8.0 L10 10.5 L15 8.0 L15 3.0" fill="none" stroke="#1740a6" stroke-width="0.7"/><path d="M8 3.0 L12 3.0 M10 1.8 L10 4.2" stroke="#d8e6ff" stroke-width="1"/><path d="M7 5.5 L7 7.5" stroke="#9dbcf7" stroke-width="1"/><path d="M5 7.5 L10 10.0 L5 12.5 L0 10.0Z" fill="#5b8ff0"/><path d="M0 10.0 L5 12.5 L5 17.5 L0 15.0Z" fill="#3470e2"/><path d="M10 10.0 L5 12.5 L5 17.5 L10 15.0Z" fill="#1c4fc6"/><path d="M0 10.0 L0 15.0 L5 17.5 L10 15.0 L10 10.0" fill="none" stroke="#1740a6" stroke-width="0.7"/><path d="M3 10.0 L7 10.0 M5 8.8 L5 11.2" stroke="#d8e6ff" stroke-width="1"/><path d="M2 12.5 L2 14.5" stroke="#9dbcf7" stroke-width="1"/><path d="M15 7.5 L20 10.0 L15 12.5 L10 10.0Z" fill="#5b8ff0"/><path d="M10 10.0 L15 12.5 L15 17.5 L10 15.0Z" fill="#3470e2"/><path d="M20 10.0 L15 12.5 L15 17.5 L20 15.0Z" fill="#1c4fc6"/><path d="M10 10.0 L10 15.0 L15 17.5 L20 15.0 L20 10.0" fill="none" stroke="#1740a6" stroke-width="0.7"/><path d="M13 10.0 L17 10.0 M15 8.8 L15 11.2" stroke="#d8e6ff" stroke-width="1"/><path d="M12 12.5 L12 14.5" stroke="#9dbcf7" stroke-width="1"/></svg>
<div class="t" style="top:544px;font-size:16px;left:50px;transform:scaleX(0.848);transform-origin:0 0;">ASM: 17 20-3666-01</div>
<div style="position:absolute;left:7px;top:567px;width:11px;height:11px;background:#fff"></div>
<div class="a" style="left:18px;top:572px;width:6px;height:1px;background:repeating-linear-gradient(to right,#969696 0,#969696 1px,transparent 1px,transparent 2px,#a8a8a8 2px,#a8a8a8 3px,transparent 3px,transparent 5px)"></div>
<div class="a" style="left:7px;top:567px;width:9px;height:9px;border:1px solid #8c8c8c;border-radius:2px;background:linear-gradient(#ffffff,#e8e8e8)"></div>
<div style="position:absolute;left:9px;top:572px;width:7px;height:1px;background:#34528f"></div>
<div style="position:absolute;left:12px;top:569px;width:1px;height:7px;background:#34528f"></div>
<svg style="left:24px;top:565px" width="20" height="18" viewBox="0 0 20 18"><path d="M10 0.5 L15 3.0 L10 5.5 L5 3.0Z" fill="#5b8ff0"/><path d="M5 3.0 L10 5.5 L10 10.5 L5 8.0Z" fill="#3470e2"/><path d="M15 3.0 L10 5.5 L10 10.5 L15 8.0Z" fill="#1c4fc6"/><path d="M5 3.0 L5 8.0 L10 10.5 L15 8.0 L15 3.0" fill="none" stroke="#1740a6" stroke-width="0.7"/><path d="M8 3.0 L12 3.0 M10 1.8 L10 4.2" stroke="#d8e6ff" stroke-width="1"/><path d="M7 5.5 L7 7.5" stroke="#9dbcf7" stroke-width="1"/><path d="M5 7.5 L10 10.0 L5 12.5 L0 10.0Z" fill="#5b8ff0"/><path d="M0 10.0 L5 12.5 L5 17.5 L0 15.0Z" fill="#3470e2"/><path d="M10 10.0 L5 12.5 L5 17.5 L10 15.0Z" fill="#1c4fc6"/><path d="M0 10.0 L0 15.0 L5 17.5 L10 15.0 L10 10.0" fill="none" stroke="#1740a6" stroke-width="0.7"/><path d="M3 10.0 L7 10.0 M5 8.8 L5 11.2" stroke="#d8e6ff" stroke-width="1"/><path d="M2 12.5 L2 14.5" stroke="#9dbcf7" stroke-width="1"/><path d="M15 7.5 L20 10.0 L15 12.5 L10 10.0Z" fill="#5b8ff0"/><path d="M10 10.0 L15 12.5 L15 17.5 L10 15.0Z" fill="#3470e2"/><path d="M20 10.0 L15 12.5 L15 17.5 L20 15.0Z" fill="#1c4fc6"/><path d="M10 10.0 L10 15.0 L15 17.5 L20 15.0 L20 10.0" fill="none" stroke="#1740a6" stroke-width="0.7"/><path d="M13 10.0 L17 10.0 M15 8.8 L15 11.2" stroke="#d8e6ff" stroke-width="1"/><path d="M12 12.5 L12 14.5" stroke="#9dbcf7" stroke-width="1"/></svg>
<div class="t" style="top:564px;font-size:16px;left:50px;transform:scaleX(0.848);transform-origin:0 0;">ASM: 18 20-3666-02</div>
<div style="position:absolute;left:7px;top:587px;width:11px;height:11px;background:#fff"></div>
<div class="a" style="left:18px;top:592px;width:6px;height:1px;background:repeating-linear-gradient(to right,#969696 0,#969696 1px,transparent 1px,transparent 2px,#a8a8a8 2px,#a8a8a8 3px,transparent 3px,transparent 5px)"></div>
<div class="a" style="left:7px;top:587px;width:9px;height:9px;border:1px solid #8c8c8c;border-radius:2px;background:linear-gradient(#ffffff,#e8e8e8)"></div>
<div style="position:absolute;left:9px;top:592px;width:7px;height:1px;background:#34528f"></div>
<div style="position:absolute;left:12px;top:589px;width:1px;height:7px;background:#34528f"></div>
<svg style="left:24px;top:585px" width="20" height="18" viewBox="0 0 20 18"><path d="M10 0.5 L15 3.0 L10 5.5 L5 3.0Z" fill="#5b8ff0"/><path d="M5 3.0 L10 5.5 L10 10.5 L5 8.0Z" fill="#3470e2"/><path d="M15 3.0 L10 5.5 L10 10.5 L15 8.0Z" fill="#1c4fc6"/><path d="M5 3.0 L5 8.0 L10 10.5 L15 8.0 L15 3.0" fill="none" stroke="#1740a6" stroke-width="0.7"/><path d="M8 3.0 L12 3.0 M10 1.8 L10 4.2" stroke="#d8e6ff" stroke-width="1"/><path d="M7 5.5 L7 7.5" stroke="#9dbcf7" stroke-width="1"/><path d="M5 7.5 L10 10.0 L5 12.5 L0 10.0Z" fill="#5b8ff0"/><path d="M0 10.0 L5 12.5 L5 17.5 L0 15.0Z" fill="#3470e2"/><path d="M10 10.0 L5 12.5 L5 17.5 L10 15.0Z" fill="#1c4fc6"/><path d="M0 10.0 L0 15.0 L5 17.5 L10 15.0 L10 10.0" fill="none" stroke="#1740a6" stroke-width="0.7"/><path d="M3 10.0 L7 10.0 M5 8.8 L5 11.2" stroke="#d8e6ff" stroke-width="1"/><path d="M2 12.5 L2 14.5" stroke="#9dbcf7" stroke-width="1"/><path d="M15 7.5 L20 10.0 L15 12.5 L10 10.0Z" fill="#5b8ff0"/><path d="M10 10.0 L15 12.5 L15 17.5 L10 15.0Z" fill="#3470e2"/><path d="M20 10.0 L15 12.5 L15 17.5 L20 15.0Z" fill="#1c4fc6"/><path d="M10 10.0 L10 15.0 L15 17.5 L20 15.0 L20 10.0" fill="none" stroke="#1740a6" stroke-width="0.7"/><path d="M13 10.0 L17 10.0 M15 8.8 L15 11.2" stroke="#d8e6ff" stroke-width="1"/><path d="M12 12.5 L12 14.5" stroke="#9dbcf7" stroke-width="1"/></svg>
<div class="t" style="top:584px;font-size:16px;left:50px;transform:scaleX(0.848);transform-origin:0 0;">ASM: 19 20-3433-01</div>
<div style="position:absolute;left:7px;top:607px;width:11px;height:11px;background:#fff"></div>
<div class="a" style="left:18px;top:612px;width:6px;height:1px;background:repeating-linear-gradient(to right,#969696 0,#969696 1px,transparent 1px,transparent 2px,#a8a8a8 2px,#a8a8a8 3px,transparent 3px,transparent 5px)"></div>
<div class="a" style="left:7px;top:607px;width:9px;height:9px;border:1px solid #8c8c8c;border-radius:2px;background:linear-gradient(#ffffff,#e8e8e8)"></div>
<div style="position:absolute;left:9px;top:612px;width:7px;height:1px;background:#34528f"></div>
<div style="position:absolute;left:12px;top:609px;width:1px;height:7px;background:#34528f"></div>
<svg style="left:24px;top:605px" width="20" height="18" viewBox="0 0 20 18"><path d="M10 0.5 L15 3.0 L10 5.5 L5 3.0Z" fill="#5b8ff0"/><path d="M5 3.0 L10 5.5 L10 10.5 L5 8.0Z" fill="#3470e2"/><path d="M15 3.0 L10 5.5 L10 10.5 L15 8.0Z" fill="#1c4fc6"/><path d="M5 3.0 L5 8.0 L10 10.5 L15 8.0 L15 3.0" fill="none" stroke="#1740a6" stroke-width="0.7"/><path d="M8 3.0 L12 3.0 M10 1.8 L10 4.2" stroke="#d8e6ff" stroke-width="1"/><path d="M7 5.5 L7 7.5" stroke="#9dbcf7" stroke-width="1"/><path d="M5 7.5 L10 10.0 L5 12.5 L0 10.0Z" fill="#5b8ff0"/><path d="M0 10.0 L5 12.5 L5 17.5 L0 15.0Z" fill="#3470e2"/><path d="M10 10.0 L5 12.5 L5 17.5 L10 15.0Z" fill="#1c4fc6"/><path d="M0 10.0 L0 15.0 L5 17.5 L10 15.0 L10 10.0" fill="none" stroke="#1740a6" stroke-width="0.7"/><path d="M3 10.0 L7 10.0 M5 8.8 L5 11.2" stroke="#d8e6ff" stroke-width="1"/><path d="M2 12.5 L2 14.5" stroke="#9dbcf7" stroke-width="1"/><path d="M15 7.5 L20 10.0 L15 12.5 L10 10.0Z" fill="#5b8ff0"/><path d="M10 10.0 L15 12.5 L15 17.5 L10 15.0Z" fill="#3470e2"/><path d="M20 10.0 L15 12.5 L15 17.5 L20 15.0Z" fill="#1c4fc6"/><path d="M10 10.0 L10 15.0 L15 17.5 L20 15.0 L20 10.0" fill="none" stroke="#1740a6" stroke-width="0.7"/><path d="M13 10.0 L17 10.0 M15 8.8 L15 11.2" stroke="#d8e6ff" stroke-width="1"/><path d="M12 12.5 L12 14.5" stroke="#9dbcf7" stroke-width="1"/></svg>
<div class="t" style="top:604px;font-size:16px;left:50px;transform:scaleX(0.848);transform-origin:0 0;">ASM: 20 20-3433-02</div>
<div style="position:absolute;left:7px;top:627px;width:11px;height:11px;background:#fff"></div>
<div class="a" style="left:18px;top:632px;width:6px;height:1px;background:repeating-linear-gradient(to right,#969696 0,#969696 1px,transparent 1px,transparent 2px,#a8a8a8 2px,#a8a8a8 3px,transparent 3px,transparent 5px)"></div>
<div class="a" style="left:7px;top:627px;width:9px;height:9px;border:1px solid #8c8c8c;border-radius:2px;background:linear-gradient(#ffffff,#e8e8e8)"></div>
<div style="position:absolute;left:9px;top:632px;width:7px;height:1px;background:#34528f"></div>
<div style="position:absolute;left:12px;top:629px;width:1px;height:7px;background:#34528f"></div>
<svg style="left:24px;top:625px" width="20" height="18" viewBox="0 0 20 18"><path d="M10 0.5 L15 3.0 L10 5.5 L5 3.0Z" fill="#5b8ff0"/><path d="M5 3.0 L10 5.5 L10 10.5 L5 8.0Z" fill="#3470e2"/><path d="M15 3.0 L10 5.5 L10 10.5 L15 8.0Z" fill="#1c4fc6"/><path d="M5 3.0 L5 8.0 L10 10.5 L15 8.0 L15 3.0" fill="none" stroke="#1740a6" stroke-width="0.7"/><path d="M8 3.0 L12 3.0 M10 1.8 L10 4.2" stroke="#d8e6ff" stroke-width="1"/><path d="M7 5.5 L7 7.5" stroke="#9dbcf7" stroke-width="1"/><path d="M5 7.5 L10 10.0 L5 12.5 L0 10.0Z" fill="#5b8ff0"/><path d="M0 10.0 L5 12.5 L5 17.5 L0 15.0Z" fill="#3470e2"/><path d="M10 10.0 L5 12.5 L5 17.5 L10 15.0Z" fill="#1c4fc6"/><path d="M0 10.0 L0 15.0 L5 17.5 L10 15.0 L10 10.0" fill="none" stroke="#1740a6" stroke-width="0.7"/><path d="M3 10.0 L7 10.0 M5 8.8 L5 11.2" stroke="#d8e6ff" stroke-width="1"/><path d="M2 12.5 L2 14.5" stroke="#9dbcf7" stroke-width="1"/><path d="M15 7.5 L20 10.0 L15 12.5 L10 10.0Z" fill="#5b8ff0"/><path d="M10 10.0 L15 12.5 L15 17.5 L10 15.0Z" fill="#3470e2"/><path d="M20 10.0 L15 12.5 L15 17.5 L20 15.0Z" fill="#1c4fc6"/><path d="M10 10.0 L10 15.0 L15 17.5 L20 15.0 L20 10.0" fill="none" stroke="#1740a6" stroke-width="0.7"/><path d="M13 10.0 L17 10.0 M15 8.8 L15 11.2" stroke="#d8e6ff" stroke-width="1"/><path d="M12 12.5 L12 14.5" stroke="#9dbcf7" stroke-width="1"/></svg>
<div class="t" style="top:624px;font-size:16px;left:50px;transform:scaleX(0.848);transform-origin:0 0;">ASM: 21 20-3662</div>
<div style="position:absolute;left:7px;top:647px;width:11px;height:11px;background:#fff"></div>
<div class="a" style="left:18px;top:652px;width:6px;height:1px;background:repeating-linear-gradient(to right,#969696 0,#969696 1px,transparent 1px,transparent 2px,#a8a8a8 2px,#a8a8a8 3px,transparent 3px,transparent 5px)"></div>
<div class="a" style="left:7px;top:647px;width:9px;height:9px;border:1px solid #8c8c8c;border-radius:2px;background:linear-gradient(#ffffff,#e8e8e8)"></div>
<div style="position:absolute;left:9px;top:652px;width:7px;height:1px;background:#34528f"></div>
<div style="position:absolute;left:12px;top:649px;width:1px;height:7px;background:#34528f"></div>
<svg style="left:24px;top:645px" width="20" height="18" viewBox="0 0 20 18"><path d="M10 0.5 L15 3.0 L10 5.5 L5 3.0Z" fill="#5b8ff0"/><path d="M5 3.0 L10 5.5 L10 10.5 L5 8.0Z" fill="#3470e2"/><path d="M15 3.0 L10 5.5 L10 10.5 L15 8.0Z" fill="#1c4fc6"/><path d="M5 3.0 L5 8.0 L10 10.5 L15 8.0 L15 3.0" fill="none" stroke="#1740a6" stroke-width="0.7"/><path d="M8 3.0 L12 3.0 M10 1.8 L10 4.2" stroke="#d8e6ff" stroke-width="1"/><path d="M7 5.5 L7 7.5" stroke="#9dbcf7" stroke-width="1"/><path d="M5 7.5 L10 10.0 L5 12.5 L0 10.0Z" fill="#5b8ff0"/><path d="M0 10.0 L5 12.5 L5 17.5 L0 15.0Z" fill="#3470e2"/><path d="M10 10.0 L5 12.5 L5 17.5 L10 15.0Z" fill="#1c4fc6"/><path d="M0 10.0 L0 15.0 L5 17.5 L10 15.0 L10 10.0" fill="none" stroke="#1740a6" stroke-width="0.7"/><path d="M3 10.0 L7 10.0 M5 8.8 L5 11.2" stroke="#d8e6ff" stroke-width="1"/><path d="M2 12.5 L2 14.5" stroke="#9dbcf7" stroke-width="1"/><path d="M15 7.5 L20 10.0 L15 12.5 L10 10.0Z" fill="#5b8ff0"/><path d="M10 10.0 L15 12.5 L15 17.5 L10 15.0Z" fill="#3470e2"/><path d="M20 10.0 L15 12.5 L15 17.5 L20 15.0Z" fill="#1c4fc6"/><path d="M10 10.0 L10 15.0 L15 17.5 L20 15.0 L20 10.0" fill="none" stroke="#1740a6" stroke-width="0.7"/><path d="M13 10.0 L17 10.0 M15 8.8 L15 11.2" stroke="#d8e6ff" stroke-width="1"/><path d="M12 12.5 L12 14.5" stroke="#9dbcf7" stroke-width="1"/></svg>
<div class="t" style="top:644px;font-size:16px;left:50px;transform:scaleX(0.848);transform-origin:0 0;">ASM: 22 20-3596-01</div>
<div style="position:absolute;left:7px;top:667px;width:11px;height:11px;background:#fff"></div>
<div class="a" style="left:18px;top:672px;width:6px;height:1px;background:repeating-linear-gradient(to right,#969696 0,#969696 1px,transparent 1px,transparent 2px,#a8a8a8 2px,#a8a8a8 3px,transparent 3px,transparent 5px)"></div>
<div class="a" style="left:7px;top:667px;width:9px;height:9px;border:1px solid #8c8c8c;border-radius:2px;background:linear-gradient(#ffffff,#e8e8e8)"></div>
<div style="position:absolute;left:9px;top:672px;width:7px;height:1px;background:#34528f"></div>
<div style="position:absolute;left:12px;top:669px;width:1px;height:7px;background:#34528f"></div>
<svg style="left:24px;top:665px" width="20" height="18" viewBox="0 0 20 18"><path d="M10 0.5 L15 3.0 L10 5.5 L5 3.0Z" fill="#5b8ff0"/><path d="M5 3.0 L10 5.5 L10 10.5 L5 8.0Z" fill="#3470e2"/><path d="M15 3.0 L10 5.5 L10 10.5 L15 8.0Z" fill="#1c4fc6"/><path d="M5 3.0 L5 8.0 L10 10.5 L15 8.0 L15 3.0" fill="none" stroke="#1740a6" stroke-width="0.7"/><path d="M8 3.0 L12 3.0 M10 1.8 L10 4.2" stroke="#d8e6ff" stroke-width="1"/><path d="M7 5.5 L7 7.5" stroke="#9dbcf7" stroke-width="1"/><path d="M5 7.5 L10 10.0 L5 12.5 L0 10.0Z" fill="#5b8ff0"/><path d="M0 10.0 L5 12.5 L5 17.5 L0 15.0Z" fill="#3470e2"/><path d="M10 10.0 L5 12.5 L5 17.5 L10 15.0Z" fill="#1c4fc6"/><path d="M0 10.0 L0 15.0 L5 17.5 L10 15.0 L10 10.0" fill="none" stroke="#1740a6" stroke-width="0.7"/><path d="M3 10.0 L7 10.0 M5 8.8 L5 11.2" stroke="#d8e6ff" stroke-width="1"/><path d="M2 12.5 L2 14.5" stroke="#9dbcf7" stroke-width="1"/><path d="M15 7.5 L20 10.0 L15 12.5 L10 10.0Z" fill="#5b8ff0"/><path d="M10 10.0 L15 12.5 L15 17.5 L10 15.0Z" fill="#3470e2"/><path d="M20 10.0 L15 12.5 L15 17.5 L20 15.0Z" fill="#1c4fc6"/><path d="M10 10.0 L10 15.0 L15 17.5 L20 15.0 L20 10.0" fill="none" stroke="#1740a6" stroke-width="0.7"/><path d="M13 10.0 L17 10.0 M15 8.8 L15 11.2" stroke="#d8e6ff" stroke-width="1"/><path d="M12 12.5 L12 14.5" stroke="#9dbcf7" stroke-width="1"/></svg>
<div class="t" style="top:664px;font-size:16px;left:50px;transform:scaleX(0.848);transform-origin:0 0;">ASM: 23 20-3596-02</div>
<div style="position:absolute;left:7px;top:687px;width:11px;height:11px;background:#fff"></div>
<div class="a" style="left:18px;top:692px;width:6px;height:1px;background:repeating-linear-gradient(to right,#969696 0,#969696 1px,transparent 1px,transparent 2px,#a8a8a8 2px,#a8a8a8 3px,transparent 3px,transparent 5px)"></div>
<div class="a" style="left:7px;top:687px;width:9px;height:9px;border:1px solid #8c8c8c;border-radius:2px;background:linear-gradient(#ffffff,#e8e8e8)"></div>
<div style="position:absolute;left:9px;top:692px;width:7px;height:1px;background:#34528f"></div>
<div style="position:absolute;left:12px;top:689px;width:1px;height:7px;background:#34528f"></div>
<svg style="left:24px;top:685px" width="20" height="18" viewBox="0 0 20 18"><path d="M10 0.5 L15 3.0 L10 5.5 L5 3.0Z" fill="#5b8ff0"/><path d="M5 3.0 L10 5.5 L10 10.5 L5 8.0Z" fill="#3470e2"/><path d="M15 3.0 L10 5.5 L10 10.5 L15 8.0Z" fill="#1c4fc6"/><path d="M5 3.0 L5 8.0 L10 10.5 L15 8.0 L15 3.0" fill="none" stroke="#1740a6" stroke-width="0.7"/><path d="M8 3.0 L12 3.0 M10 1.8 L10 4.2" stroke="#d8e6ff" stroke-width="1"/><path d="M7 5.5 L7 7.5" stroke="#9dbcf7" stroke-width="1"/><path d="M5 7.5 L10 10.0 L5 12.5 L0 10.0Z" fill="#5b8ff0"/><path d="M0 10.0 L5 12.5 L5 17.5 L0 15.0Z" fill="#3470e2"/><path d="M10 10.0 L5 12.5 L5 17.5 L10 15.0Z" fill="#1c4fc6"/><path d="M0 10.0 L0 15.0 L5 17.5 L10 15.0 L10 10.0" fill="none" stroke="#1740a6" stroke-width="0.7"/><path d="M3 10.0 L7 10.0 M5 8.8 L5 11.2" stroke="#d8e6ff" stroke-width="1"/><path d="M2 12.5 L2 14.5" stroke="#9dbcf7" stroke-width="1"/><path d="M15 7.5 L20 10.0 L15 12.5 L10 10.0Z" fill="#5b8ff0"/><path d="M10 10.0 L15 12.5 L15 17.5 L10 15.0Z" fill="#3470e2"/><path d="M20 10.0 L15 12.5 L15 17.5 L20 15.0Z" fill="#1c4fc6"/><path d="M10 10.0 L10 15.0 L15 17.5 L20 15.0 L20 10.0" fill="none" stroke="#1740a6" stroke-width="0.7"/><path d="M13 10.0 L17 10.0 M15 8.8 L15 11.2" stroke="#d8e6ff" stroke-width="1"/><path d="M12 12.5 L12 14.5" stroke="#9dbcf7" stroke-width="1"/></svg>
<div class="t" style="top:684px;font-size:16px;left:50px;transform:scaleX(0.848);transform-origin:0 0;">ASM: 24 20-3591-01</div>
<div style="position:absolute;left:7px;top:707px;width:11px;height:11px;background:#fff"></div>
<div class="a" style="left:18px;top:712px;width:6px;height:1px;background:repeating-linear-gradient(to right,#969696 0,#969696 1px,transparent 1px,transparent 2px,#a8a8a8 2px,#a8a8a8 3px,transparent 3px,transparent 5px)"></div>
<div class="a" style="left:7px;top:707px;width:9px;height:9px;border:1px solid #8c8c8c;border-radius:2px;background:linear-gradient(#ffffff,#e8e8e8)"></div>
<div style="position:absolute;left:9px;top:712px;width:7px;height:1px;background:#34528f"></div>
<div style="position:absolute;left:12px;top:709px;width:1px;height:7px;background:#34528f"></div>
<svg style="left:24px;top:705px" width="20" height="18" viewBox="0 0 20 18"><path d="M10 0.5 L15 3.0 L10 5.5 L5 3.0Z" fill="#5b8ff0"/><path d="M5 3.0 L10 5.5 L10 10.5 L5 8.0Z" fill="#3470e2"/><path d="M15 3.0 L10 5.5 L10 10.5 L15 8.0Z" fill="#1c4fc6"/><path d="M5 3.0 L5 8.0 L10 10.5 L15 8.0 L15 3.0" fill="none" stroke="#1740a6" stroke-width="0.7"/><path d="M8 3.0 L12 3.0 M10 1.8 L10 4.2" stroke="#d8e6ff" stroke-width="1"/><path d="M7 5.5 L7 7.5" stroke="#9dbcf7" stroke-width="1"/><path d="M5 7.5 L10 10.0 L5 12.5 L0 10.0Z" fill="#5b8ff0"/><path d="M0 10.0 L5 12.5 L5 17.5 L0 15.0Z" fill="#3470e2"/><path d="M10 10.0 L5 12.5 L5 17.5 L10 15.0Z" fill="#1c4fc6"/><path d="M0 10.0 L0 15.0 L5 17.5 L10 15.0 L10 10.0" fill="none" stroke="#1740a6" stroke-width="0.7"/><path d="M3 10.0 L7 10.0 M5 8.8 L5 11.2" stroke="#d8e6ff" stroke-width="1"/><path d="M2 12.5 L2 14.5" stroke="#9dbcf7" stroke-width="1"/><path d="M15 7.5 L20 10.0 L15 12.5 L10 10.0Z" fill="#5b8ff0"/><path d="M10 10.0 L15 12.5 L15 17.5 L10 15.0Z" fill="#3470e2"/><path d="M20 10.0 L15 12.5 L15 17.5 L20 15.0Z" fill="#1c4fc6"/><path d="M10 10.0 L10 15.0 L15 17.5 L20 15.0 L20 10.0" fill="none" stroke="#1740a6" stroke-width="0.7"/><path d="M13 10.0 L17 10.0 M15 8.8 L15 11.2" stroke="#d8e6ff" stroke-width="1"/><path d="M12 12.5 L12 14.5" stroke="#9dbcf7" stroke-width="1"/></svg>
<div class="t" style="top:704px;font-size:16px;left:50px;transform:scaleX(0.848);transform-origin:0 0;">ASM: 25 20-3591-02</div>
<div style="position:absolute;left:7px;top:727px;width:11px;height:11px;background:#fff"></div>
<div class="a" style="left:18px;top:732px;width:6px;height:1px;background:repeating-linear-gradient(to right,#969696 0,#969696 1px,transparent 1px,transparent 2px,#a8a8a8 2px,#a8a8a8 3px,transparent 3px,transparent 5px)"></div>
<div class="a" style="left:7px;top:727px;width:9px;height:9px;border:1px solid #8c8c8c;border-radius:2px;background:linear-gradient(#ffffff,#e8e8e8)"></div>
<div style="position:absolute;left:9px;top:732px;width:7px;height:1px;background:#34528f"></div>
<div style="position:absolute;left:12px;top:729px;width:1px;height:7px;background:#34528f"></div>
<svg style="left:24px;top:725px" width="20" height="18" viewBox="0 0 20 18"><path d="M10 0.5 L15 3.0 L10 5.5 L5 3.0Z" fill="#5b8ff0"/><path d="M5 3.0 L10 5.5 L10 10.5 L5 8.0Z" fill="#3470e2"/><path d="M15 3.0 L10 5.5 L10 10.5 L15 8.0Z" fill="#1c4fc6"/><path d="M5 3.0 L5 8.0 L10 10.5 L15 8.0 L15 3.0" fill="none" stroke="#1740a6" stroke-width="0.7"/><path d="M8 3.0 L12 3.0 M10 1.8 L10 4.2" stroke="#d8e6ff" stroke-width="1"/><path d="M7 5.5 L7 7.5" stroke="#9dbcf7" stroke-width="1"/><path d="M5 7.5 L10 10.0 L5 12.5 L0 10.0Z" fill="#5b8ff0"/><path d="M0 10.0 L5 12.5 L5 17.5 L0 15.0Z" fill="#3470e2"/><path d="M10 10.0 L5 12.5 L5 17.5 L10 15.0Z" fill="#1c4fc6"/><path d="M0 10.0 L0 15.0 L5 17.5 L10 15.0 L10 10.0" fill="none" stroke="#1740a6" stroke-width="0.7"/><path d="M3 10.0 L7 10.0 M5 8.8 L5 11.2" stroke="#d8e6ff" stroke-width="1"/><path d="M2 12.5 L2 14.5" stroke="#9dbcf7" stroke-width="1"/><path d="M15 7.5 L20 10.0 L15 12.5 L10 10.0Z" fill="#5b8ff0"/><path d="M10 10.0 L15 12.5 L15 17.5 L10 15.0Z" fill="#3470e2"/><path d="M20 10.0 L15 12.5 L15 17.5 L20 15.0Z" fill="#1c4fc6"/><path d="M10 10.0 L10 15.0 L15 17.5 L20 15.0 L20 10.0" fill="none" stroke="#1740a6" stroke-width="0.7"/><path d="M13 10.0 L17 10.0 M15 8.8 L15 11.2" stroke="#d8e6ff" stroke-width="1"/><path d="M12 12.5 L12 14.5" stroke="#9dbcf7" stroke-width="1"/></svg>
<div class="t" style="top:724px;font-size:16px;left:50px;transform:scaleX(0.848);transform-origin:0 0;">ASM: 26 20-3600-01</div>
<div style="position:absolute;left:7px;top:747px;width:11px;height:11px;background:#fff"></div>
<div class="a" style="left:18px;top:752px;width:6px;height:1px;background:repeating-linear-gradient(to right,#969696 0,#969696 1px,transparent 1px,transparent 2px,#a8a8a8 2px,#a8a8a8 3px,transparent 3px,transparent 5px)"></div>
<div class="a" style="left:7px;top:747px;width:9px;height:9px;border:1px solid #8c8c8c;border-radius:2px;background:linear-gradient(#ffffff,#e8e8e8)"></div>
<div style="position:absolute;left:9px;top:752px;width:7px;height:1px;background:#34528f"></div>
<div style="position:absolute;left:12px;top:749px;width:1px;height:7px;background:#34528f"></div>
<svg style="left:24px;top:745px" width="20" height="18" viewBox="0 0 20 18"><path d="M10 0.5 L15 3.0 L10 5.5 L5 3.0Z" fill="#5b8ff0"/><path d="M5 3.0 L10 5.5 L10 10.5 L5 8.0Z" fill="#3470e2"/><path d="M15 3.0 L10 5.5 L10 10.5 L15 8.0Z" fill="#1c4fc6"/><path d="M5 3.0 L5 8.0 L10 10.5 L15 8.0 L15 3.0" fill="none" stroke="#1740a6" stroke-width="0.7"/><path d="M8 3.0 L12 3.0 M10 1.8 L10 4.2" stroke="#d8e6ff" stroke-width="1"/><path d="M7 5.5 L7 7.5" stroke="#9dbcf7" stroke-width="1"/><path d="M5 7.5 L10 10.0 L5 12.5 L0 10.0Z" fill="#5b8ff0"/><path d="M0 10.0 L5 12.5 L5 17.5 L0 15.0Z" fill="#3470e2"/><path d="M10 10.0 L5 12.5 L5 17.5 L10 15.0Z" fill="#1c4fc6"/><path d="M0 10.0 L0 15.0 L5 17.5 L10 15.0 L10 10.0" fill="none" stroke="#1740a6" stroke-width="0.7"/><path d="M3 10.0 L7 10.0 M5 8.8 L5 11.2" stroke="#d8e6ff" stroke-width="1"/><path d="M2 12.5 L2 14.5" stroke="#9dbcf7" stroke-width="1"/><path d="M15 7.5 L20 10.0 L15 12.5 L10 10.0Z" fill="#5b8ff0"/><path d="M10 10.0 L15 12.5 L15 17.5 L10 15.0Z" fill="#3470e2"/><path d="M20 10.0 L15 12.5 L15 17.5 L20 15.0Z" fill="#1c4fc6"/><path d="M10 10.0 L10 15.0 L15 17.5 L20 15.0 L20 10.0" fill="none" stroke="#1740a6" stroke-width="0.7"/><path d="M13 10.0 L17 10.0 M15 8.8 L15 11.2" stroke="#d8e6ff" stroke-width="1"/><path d="M12 12.5 L12 14.5" stroke="#9dbcf7" stroke-width="1"/></svg>
<div class="t" style="top:744px;font-size:16px;left:50px;transform:scaleX(0.848);transform-origin:0 0;">ASM: 27 20-3600-02</div>
<div style="position:absolute;left:7px;top:767px;width:11px;height:11px;background:#fff"></div>
<div class="a" style="left:18px;top:772px;width:6px;height:1px;background:repeating-linear-gradient(to right,#969696 0,#969696 1px,transparent 1px,transparent 2px,#a8a8a8 2px,#a8a8a8 3px,transparent 3px,transparent 5px)"></div>
<div class="a" style="left:7px;top:767px;width:9px;height:9px;border:1px solid #8c8c8c;border-radius:2px;background:linear-gradient(#ffffff,#e8e8e8)"></div>
<div style="position:absolute;left:9px;top:772px;width:7px;height:1px;background:#34528f"></div>
<div style="position:absolute;left:12px;top:769px;width:1px;height:7px;background:#34528f"></div>
<svg style="left:24px;top:765px" width="20" height="18" viewBox="0 0 20 18"><path d="M10 0.5 L15 3.0 L10 5.5 L5 3.0Z" fill="#5b8ff0"/><path d="M5 3.0 L10 5.5 L10 10.5 L5 8.0Z" fill="#3470e2"/><path d="M15 3.0 L10 5.5 L10 10.5 L15 8.0Z" fill="#1c4fc6"/><path d="M5 3.0 L5 8.0 L10 10.5 L15 8.0 L15 3.0" fill="none" stroke="#1740a6" stroke-width="0.7"/><path d="M8 3.0 L12 3.0 M10 1.8 L10 4.2" stroke="#d8e6ff" stroke-width="1"/><path d="M7 5.5 L7 7.5" stroke="#9dbcf7" stroke-width="1"/><path d="M5 7.5 L10 10.0 L5 12.5 L0 10.0Z" fill="#5b8ff0"/><path d="M0 10.0 L5 12.5 L5 17.5 L0 15.0Z" fill="#3470e2"/><path d="M10 10.0 L5 12.5 L5 17.5 L10 15.0Z" fill="#1c4fc6"/><path d="M0 10.0 L0 15.0 L5 17.5 L10 15.0 L10 10.0" fill="none" stroke="#1740a6" stroke-width="0.7"/><path d="M3 10.0 L7 10.0 M5 8.8 L5 11.2" stroke="#d8e6ff" stroke-width="1"/><path d="M2 12.5 L2 14.5" stroke="#9dbcf7" stroke-width="1"/><path d="M15 7.5 L20 10.0 L15 12.5 L10 10.0Z" fill="#5b8ff0"/><path d="M10 10.0 L15 12.5 L15 17.5 L10 15.0Z" fill="#3470e2"/><path d="M20 10.0 L15 12.5 L15 17.5 L20 15.0Z" fill="#1c4fc6"/><path d="M10 10.0 L10 15.0 L15 17.5 L20 15.0 L20 10.0" fill="none" stroke="#1740a6" stroke-width="0.7"/><path d="M13 10.0 L17 10.0 M15 8.8 L15 11.2" stroke="#d8e6ff" stroke-width="1"/><path d="M12 12.5 L12 14.5" stroke="#9dbcf7" stroke-width="1"/></svg>
<div class="t" style="top:764px;font-size:16px;left:50px;transform:scaleX(0.848);transform-origin:0 0;">ASM: 28 20-3606</div>
<div style="position:absolute;left:188px;top:0px;width:20px;height:770px;background:#f0f0f0"></div>
<div style="position:absolute;left:188px;top:0px;width:19px;height:164px;background:#cdcdcd"></div>
<div style="position:absolute;left:208px;top:0px;width:1px;height:770px;background:#878a92"></div>
<div style="position:absolute;left:193px;top:769px;width:2px;height:1px;background:#8c8c8c"></div>
<div style="position:absolute;left:200px;top:769px;width:2px;height:1px;background:#a0a0a0"></div>
<div style="position:absolute;left:215px;top:2px;width:554px;height:1px;background:#dcdcdc"></div>
<div style="position:absolute;left:216px;top:3px;width:553px;height:1px;background:#fff"></div>
<div style="position:absolute;left:290px;top:0px;width:1px;height:2px;background:#dcdcdc"></div>
<div style="position:absolute;left:374px;top:0px;width:1px;height:2px;background:#dcdcdc"></div>
<div style="position:absolute;left:471px;top:0px;width:1px;height:3px;background:#dcdcdc"></div>
<div style="position:absolute;left:472px;top:0px;width:90px;height:4px;background:#fff"></div>
<div style="position:absolute;left:562px;top:0px;width:1px;height:3px;background:#dcdcdc"></div>
<div style="position:absolute;left:563px;top:2px;width:206px;height:1px;background:#dcdcdc"></div>
<div style="position:absolute;left:218px;top:9px;width:551px;height:1px;background:#dcdcdc"></div>
<div style="position:absolute;left:215px;top:34px;width:554px;height:1px;background:#dcdcdc"></div>
<div style="position:absolute;left:216px;top:35px;width:553px;height:1px;background:#fff"></div>
<div style="position:absolute;left:293px;top:9px;width:1px;height:25px;background:#dcdcdc"></div>
<div style="position:absolute;left:377px;top:9px;width:1px;height:25px;background:#dcdcdc"></div>
<div style="position:absolute;left:430px;top:9px;width:1px;height:25px;background:#dcdcdc"></div>
<div style="position:absolute;left:641px;top:9px;width:1px;height:25px;background:#dcdcdc"></div>
<div style="position:absolute;left:693px;top:9px;width:1px;height:25px;background:#dcdcdc"></div>
<div style="position:absolute;left:477px;top:7px;width:56px;height:29px;background:#fff;box-sizing:border-box;border:1px solid #dcdcdc;border-bottom:none"></div>
<div class="t" style="top:13px;font-size:16px;left:225px;transform:scaleX(0.891);transform-origin:0 0;">Assembly</div>
<div class="t" style="top:13px;font-size:16px;left:302px;transform:scaleX(0.868);transform-origin:0 0;">Comments</div>
<div class="t" style="top:13px;font-size:16px;left:386px;transform:scaleX(0.89);transform-origin:0 0;">Hours</div>
<div class="t" style="top:13px;font-size:16px;left:438px;transform:scaleX(0.883);transform-origin:0 0;">Links</div>
<div class="t" style="top:11px;font-size:16px;left:487px;transform:scaleX(0.875);transform-origin:0 0;">Costs</div>
<div class="t" style="top:13px;font-size:16px;left:539px;transform:scaleX(0.879);transform-origin:0 0;">Subassemblies</div>
<div class="t" style="top:13px;font-size:16px;left:649px;transform:scaleX(0.89);transform-origin:0 0;">RoHS</div>
<div class="t" style="top:13px;font-size:16px;left:702px;transform:scaleX(0.88);transform-origin:0 0;">Transactions</div>
<div class="a" style="left:224px;top:48px;width:92px;height:25px;box-sizing:border-box;border:2px solid #0078d7;background:#e1e1e1"></div>
<div class="a" style="left:228px;top:51px;width:84px;height:18px;box-sizing:border-box;border:1px dotted #3a3a3a"></div>
<div class="t" style="top:51px;font-size:16px;left:119px;width:300px;text-align:center;transform:scaleX(0.905);transform-origin:50% 0;">Retrieve</div>
<div class="a" style="left:326px;top:48px;width:91px;height:25px;box-sizing:border-box;border:1px solid #adadad;background:#e1e1e1"></div>
<div class="t" style="top:51px;font-size:16px;left:221px;width:300px;text-align:center;transform:scaleX(0.903);transform-origin:50% 0;">Detail</div>
<div class="a" style="left:225px;top:91px;width:700px;height:216px;box-sizing:border-box;border:1px solid #d2dbe2;border-radius:3px"></div>
<div style="position:absolute;left:232px;top:83px;width:72px;height:14px;background:#f0f0f0"></div>
<div style="position:absolute;left:229px;top:305px;width:540px;height:3px;background:#f0f0f0"></div>
<div class="a" style="left:225px;top:318px;width:700px;height:220px;box-sizing:border-box;border:1px solid #d2dbe2;border-radius:3px"></div>
<div style="position:absolute;left:232px;top:310px;width:83px;height:14px;background:#f0f0f0"></div>
<div class="a" style="left:225px;top:554px;width:700px;height:800px;box-sizing:border-box;border:1px solid #d2dbe2;border-radius:3px"></div>
<div style="position:absolute;left:232px;top:546px;width:111px;height:14px;background:#f0f0f0"></div>
<div class="t" style="top:80px;font-size:16px;left:235px;transform:scaleX(0.892);transform-origin:0 0;">This Level</div>
<div class="t" style="top:308px;font-size:16px;left:234px;transform:scaleX(0.879);transform-origin:0 0;">Lower Level</div>
<div class="t" style="top:544px;font-size:16px;left:235px;transform:scaleX(0.9);transform-origin:0 0;">Assembly Totals</div>
<div class="t" style="top:102px;font-size:16px;left:457px;transform:scaleX(0.965);transform-origin:0 0;">Estimated</div>
<div class="t" style="top:102px;font-size:16px;left:626px;transform:scaleX(0.95);transform-origin:0 0;">Cost Elements</div>
<div class="t" style="top:131px;font-size:16px;right:390px;text-align:right;transform:scaleX(0.98);transform-origin:100% 0;">Material</div>
<div class="a" style="left:388px;top:127px;width:185px;height:26px;box-sizing:border-box;border:1px solid #b8b9bd"></div>
<div class="t" style="top:131px;font-size:16px;right:200px;text-align:right;transform:scaleX(0.862);transform-origin:100% 0;">647.73820</div>
<div class="a" style="left:577px;top:127px;width:185px;height:26px;box-sizing:border-box;border:1px solid #b8b9bd"></div>
<div class="t" style="top:131px;font-size:16px;right:13px;text-align:right;transform:scaleX(0.862);transform-origin:100% 0;">0.00000</div>
<div class="a" style="left:766px;top:127px;width:185px;height:26px;box-sizing:border-box;border:1px solid #b8b9bd"></div>
<div class="t" style="top:161px;font-size:16px;right:390px;text-align:right;transform:scaleX(0.98);transform-origin:100% 0;">Labor</div>
<div class="a" style="left:388px;top:157px;width:185px;height:26px;box-sizing:border-box;border:1px solid #b8b9bd"></div>
<div class="t" style="top:161px;font-size:16px;right:200px;text-align:right;transform:scaleX(0.862);transform-origin:100% 0;">0.00000</div>
<div class="a" style="left:577px;top:157px;width:185px;height:26px;box-sizing:border-box;border:1px solid #b8b9bd"></div>
<div class="t" style="top:161px;font-size:16px;right:13px;text-align:right;transform:scaleX(0.862);transform-origin:100% 0;">1,130.37000</div>
<div class="a" style="left:766px;top:157px;width:185px;height:26px;box-sizing:border-box;border:1px solid #b8b9bd"></div>
<div class="t" style="top:191px;font-size:16px;right:390px;text-align:right;transform:scaleX(0.98);transform-origin:100% 0;">Burden</div>
<div class="a" style="left:388px;top:187px;width:185px;height:26px;box-sizing:border-box;border:1px solid #b8b9bd"></div>
<div class="t" style="top:191px;font-size:16px;right:200px;text-align:right;transform:scaleX(0.862);transform-origin:100% 0;">0.00000</div>
<div class="a" style="left:577px;top:187px;width:185px;height:26px;box-sizing:border-box;border:1px solid #b8b9bd"></div>
<div class="t" style="top:191px;font-size:16px;right:13px;text-align:right;transform:scaleX(0.862);transform-origin:100% 0;">2,338.98000</div>
<div class="a" style="left:766px;top:187px;width:185px;height:26px;box-sizing:border-box;border:1px solid #b8b9bd"></div>
<div class="t" style="top:220px;font-size:16px;right:390px;text-align:right;transform:scaleX(0.98);transform-origin:100% 0;">SubContract</div>
<div class="a" style="left:388px;top:216px;width:185px;height:26px;box-sizing:border-box;border:1px solid #b8b9bd"></div>
<div class="t" style="top:220px;font-size:16px;right:200px;text-align:right;transform:scaleX(0.862);transform-origin:100% 0;">0.00000</div>
<div class="a" style="left:577px;top:216px;width:185px;height:26px;box-sizing:border-box;border:1px solid #b8b9bd"></div>
<div class="t" style="top:220px;font-size:16px;right:13px;text-align:right;transform:scaleX(0.862);transform-origin:100% 0;">0.00000</div>
<div class="a" style="left:766px;top:216px;width:185px;height:26px;box-sizing:border-box;border:1px solid #b8b9bd"></div>
<div class="t" style="top:250px;font-size:16px;right:390px;text-align:right;transform:scaleX(0.98);transform-origin:100% 0;">Mtl Burden</div>
<div class="a" style="left:388px;top:246px;width:185px;height:26px;box-sizing:border-box;border:1px solid #b8b9bd"></div>
<div class="t" style="top:250px;font-size:16px;right:200px;text-align:right;transform:scaleX(0.862);transform-origin:100% 0;">0.00000</div>
<div class="a" style="left:577px;top:246px;width:185px;height:26px;box-sizing:border-box;border:1px solid #b8b9bd"></div>
<div class="t" style="top:250px;font-size:16px;right:13px;text-align:right;transform:scaleX(0.862);transform-origin:100% 0;">0.00000</div>
<div class="a" style="left:766px;top:246px;width:185px;height:26px;box-sizing:border-box;border:1px solid #b8b9bd"></div>
<div class="t" style="top:280px;font-size:16px;right:390px;text-align:right;transform:scaleX(0.98);transform-origin:100% 0;">Total</div>
<div class="a" style="left:388px;top:276px;width:185px;height:26px;box-sizing:border-box;border:1px solid #b8b9bd"></div>
<div class="t" style="top:280px;font-size:16px;right:200px;text-align:right;transform:scaleX(0.862);transform-origin:100% 0;">647.73820</div>
<div class="a" style="left:577px;top:276px;width:185px;height:26px;box-sizing:border-box;border:1px solid #b8b9bd"></div>
<div class="t" style="top:280px;font-size:16px;right:13px;text-align:right;transform:scaleX(0.862);transform-origin:100% 0;">3,469.35000</div>
<div class="a" style="left:766px;top:276px;width:185px;height:26px;box-sizing:border-box;border:1px solid #b8b9bd"></div>
<div class="t" style="top:327px;font-size:16px;left:457px;transform:scaleX(0.965);transform-origin:0 0;">Estimated</div>
<div class="t" style="top:327px;font-size:16px;left:626px;transform:scaleX(0.95);transform-origin:0 0;">Cost Elements</div>
<div class="t" style="top:360px;font-size:16px;right:391px;text-align:right;transform:scaleX(0.98);transform-origin:100% 0;">Material</div>
<div class="a" style="left:388px;top:353px;width:185px;height:26px;box-sizing:border-box;border:1px solid #b8b9bd"></div>
<div class="t" style="top:357px;font-size:16px;right:200px;text-align:right;transform:scaleX(0.862);transform-origin:100% 0;">0.00000</div>
<div class="a" style="left:577px;top:353px;width:185px;height:26px;box-sizing:border-box;border:1px solid #b8b9bd"></div>
<div class="t" style="top:357px;font-size:16px;right:13px;text-align:right;transform:scaleX(0.862);transform-origin:100% 0;">0.00000</div>
<div class="a" style="left:766px;top:353px;width:185px;height:26px;box-sizing:border-box;border:1px solid #b8b9bd"></div>
<div class="t" style="top:390px;font-size:16px;right:391px;text-align:right;transform:scaleX(0.98);transform-origin:100% 0;">Labor</div>
<div class="a" style="left:388px;top:383px;width:185px;height:26px;box-sizing:border-box;border:1px solid #b8b9bd"></div>
<div class="t" style="top:387px;font-size:16px;right:200px;text-align:right;transform:scaleX(0.862);transform-origin:100% 0;">0.00000</div>
<div class="a" style="left:577px;top:383px;width:185px;height:26px;box-sizing:border-box;border:1px solid #b8b9bd"></div>
<div class="t" style="top:387px;font-size:16px;right:13px;text-align:right;transform:scaleX(0.862);transform-origin:100% 0;">0.00000</div>
<div class="a" style="left:766px;top:383px;width:185px;height:26px;box-sizing:border-box;border:1px solid #b8b9bd"></div>
<div class="t" style="top:420px;font-size:16px;right:391px;text-align:right;transform:scaleX(0.98);transform-origin:100% 0;">Burden</div>
<div class="a" style="left:388px;top:413px;width:185px;height:26px;box-sizing:border-box;border:1px solid #b8b9bd"></div>
<div class="t" style="top:417px;font-size:16px;right:200px;text-align:right;transform:scaleX(0.862);transform-origin:100% 0;">0.00000</div>
<div class="a" style="left:577px;top:413px;width:185px;height:26px;box-sizing:border-box;border:1px solid #b8b9bd"></div>
<div class="t" style="top:417px;font-size:16px;right:13px;text-align:right;transform:scaleX(0.862);transform-origin:100% 0;">0.00000</div>
<div class="a" style="left:766px;top:413px;width:185px;height:26px;box-sizing:border-box;border:1px solid #b8b9bd"></div>
<div class="t" style="top:450px;font-size:16px;right:391px;text-align:right;transform:scaleX(0.98);transform-origin:100% 0;">SubContract</div>
<div class="a" style="left:388px;top:443px;width:185px;height:26px;box-sizing:border-box;border:1px solid #b8b9bd"></div>
<div class="t" style="top:447px;font-size:16px;right:200px;text-align:right;transform:scaleX(0.862);transform-origin:100% 0;">0.00000</div>
<div class="a" style="left:577px;top:443px;width:185px;height:26px;box-sizing:border-box;border:1px solid #b8b9bd"></div>
<div class="t" style="top:447px;font-size:16px;right:13px;text-align:right;transform:scaleX(0.862);transform-origin:100% 0;">0.00000</div>
<div class="a" style="left:766px;top:443px;width:185px;height:26px;box-sizing:border-box;border:1px solid #b8b9bd"></div>
<div class="t" style="top:480px;font-size:16px;right:391px;text-align:right;transform:scaleX(0.98);transform-origin:100% 0;">Mtl Burden</div>
<div class="a" style="left:388px;top:472px;width:185px;height:26px;box-sizing:border-box;border:1px solid #b8b9bd"></div>
<div class="t" style="top:476px;font-size:16px;right:200px;text-align:right;transform:scaleX(0.862);transform-origin:100% 0;">0.00000</div>
<div class="a" style="left:577px;top:472px;width:185px;height:26px;box-sizing:border-box;border:1px solid #b8b9bd"></div>
<div class="t" style="top:476px;font-size:16px;right:13px;text-align:right;transform:scaleX(0.862);transform-origin:100% 0;">0.00000</div>
<div class="a" style="left:766px;top:472px;width:185px;height:26px;box-sizing:border-box;border:1px solid #b8b9bd"></div>
<div class="t" style="top:506px;font-size:16px;right:391px;text-align:right;transform:scaleX(0.98);transform-origin:100% 0;">Total</div>
<div class="a" style="left:388px;top:502px;width:185px;height:26px;box-sizing:border-box;border:1px solid #b8b9bd"></div>
<div class="t" style="top:506px;font-size:16px;right:200px;text-align:right;transform:scaleX(0.862);transform-origin:100% 0;">0.00000</div>
<div class="a" style="left:577px;top:502px;width:185px;height:26px;box-sizing:border-box;border:1px solid #b8b9bd"></div>
<div class="t" style="top:506px;font-size:16px;right:13px;text-align:right;transform:scaleX(0.862);transform-origin:100% 0;">0.00000</div>
<div class="a" style="left:766px;top:502px;width:185px;height:26px;box-sizing:border-box;border:1px solid #b8b9bd"></div>
<div class="t" style="top:562px;font-size:16px;left:458px;transform:scaleX(0.965);transform-origin:0 0;">Estimated</div>
<div class="t" style="top:562px;font-size:16px;left:627px;transform:scaleX(0.95);transform-origin:0 0;">Cost Elements</div>
<div class="t" style="top:592px;font-size:16px;right:390px;text-align:right;transform:scaleX(0.98);transform-origin:100% 0;">Material</div>
<div class="a" style="left:389px;top:587px;width:185px;height:26px;box-sizing:border-box;border:1px solid #b8b9bd"></div>
<svg style="left:394px;top:589px" width="20" height="20" viewBox="0 0 20 20"><path d="M10 0.6 L19.4 10 L10 19.4 L0.6 10Z" fill="#3566d6" stroke="#34407e" stroke-width="1"/><path d="M10 2.2 L3.2 9 L10 9Z" fill="#6d9ae8"/><path d="M10 2.2 L17.8 10 L10 17.8 L2.2 10Z" fill="none" stroke="#8aa6e6" stroke-width="0.7"/><rect x="8.8" y="4.3" width="2.4" height="2.3" fill="#fff"/><path d="M8 7.8 H11.2 V13.6 H12 V14.9 H8 V13.6 H8.8 V9.1 H8Z" fill="#fff"/></svg>
<div class="t" style="top:591px;font-size:16px;right:200px;text-align:right;transform:scaleX(0.862);transform-origin:100% 0;">647.74</div>
<div class="a" style="left:578px;top:587px;width:185px;height:26px;box-sizing:border-box;border:1px solid #b8b9bd"></div>
<div class="t" style="top:591px;font-size:16px;right:12px;text-align:right;transform:scaleX(0.862);transform-origin:100% 0;">0.00</div>
<div class="a" style="left:767px;top:587px;width:185px;height:26px;box-sizing:border-box;border:1px solid #b8b9bd"></div>
<div class="t" style="top:622px;font-size:16px;right:390px;text-align:right;transform:scaleX(0.98);transform-origin:100% 0;">Labor</div>
<div class="a" style="left:389px;top:617px;width:185px;height:26px;box-sizing:border-box;border:1px solid #b8b9bd"></div>
<div class="t" style="top:621px;font-size:16px;right:200px;text-align:right;transform:scaleX(0.862);transform-origin:100% 0;">0.00</div>
<div class="a" style="left:578px;top:617px;width:185px;height:26px;box-sizing:border-box;border:1px solid #b8b9bd"></div>
<div class="t" style="top:621px;font-size:16px;right:12px;text-align:right;transform:scaleX(0.862);transform-origin:100% 0;">1,130.37</div>
<div class="a" style="left:767px;top:617px;width:185px;height:26px;box-sizing:border-box;border:1px solid #b8b9bd"></div>
<div class="t" style="top:652px;font-size:16px;right:390px;text-align:right;transform:scaleX(0.98);transform-origin:100% 0;">Burden</div>
<div class="a" style="left:389px;top:647px;width:185px;height:26px;box-sizing:border-box;border:1px solid #b8b9bd"></div>
<div class="t" style="top:651px;font-size:16px;right:200px;text-align:right;transform:scaleX(0.862);transform-origin:100% 0;">0.00</div>
<div class="a" style="left:578px;top:647px;width:185px;height:26px;box-sizing:border-box;border:1px solid #b8b9bd"></div>
<div class="t" style="top:651px;font-size:16px;right:12px;text-align:right;transform:scaleX(0.862);transform-origin:100% 0;">2,338.98</div>
<div class="a" style="left:767px;top:647px;width:185px;height:26px;box-sizing:border-box;border:1px solid #b8b9bd"></div>
<div class="t" style="top:682px;font-size:16px;right:390px;text-align:right;transform:scaleX(0.98);transform-origin:100% 0;">SubContract</div>
<div class="a" style="left:389px;top:677px;width:185px;height:26px;box-sizing:border-box;border:1px solid #b8b9bd"></div>
<div class="t" style="top:681px;font-size:16px;right:200px;text-align:right;transform:scaleX(0.862);transform-origin:100% 0;">0.00</div>
<div class="a" style="left:578px;top:677px;width:185px;height:26px;box-sizing:border-box;border:1px solid #b8b9bd"></div>
<div class="t" style="top:681px;font-size:16px;right:12px;text-align:right;transform:scaleX(0.862);transform-origin:100% 0;">0.00</div>
<div class="a" style="left:767px;top:677px;width:185px;height:26px;box-sizing:border-box;border:1px solid #b8b9bd"></div>
<div class="t" style="top:712px;font-size:16px;right:390px;text-align:right;transform:scaleX(0.98);transform-origin:100% 0;">Mtl Burden</div>
<div class="a" style="left:389px;top:707px;width:185px;height:26px;box-sizing:border-box;border:1px solid #b8b9bd"></div>
<div class="t" style="top:711px;font-size:16px;right:200px;text-align:right;transform:scaleX(0.862);transform-origin:100% 0;">0.00</div>
<div class="a" style="left:578px;top:707px;width:185px;height:26px;box-sizing:border-box;border:1px solid #b8b9bd"></div>
<div class="t" style="top:711px;font-size:16px;right:12px;text-align:right;transform:scaleX(0.862);transform-origin:100% 0;">0.00</div>
<div class="a" style="left:767px;top:707px;width:185px;height:26px;box-sizing:border-box;border:1px solid #b8b9bd"></div>
<div class="t" style="top:742px;font-size:16px;right:390px;text-align:right;transform:scaleX(0.98);transform-origin:100% 0;">Total</div>
<div class="a" style="left:389px;top:738px;width:185px;height:26px;box-sizing:border-box;border:1px solid #b8b9bd"></div>
<svg style="left:394px;top:740px" width="20" height="20" viewBox="0 0 20 20"><path d="M10 0.6 L19.4 10 L10 19.4 L0.6 10Z" fill="#3566d6" stroke="#34407e" stroke-width="1"/><path d="M10 2.2 L3.2 9 L10 9Z" fill="#6d9ae8"/><path d="M10 2.2 L17.8 10 L10 17.8 L2.2 10Z" fill="none" stroke="#8aa6e6" stroke-width="0.7"/><rect x="8.8" y="4.3" width="2.4" height="2.3" fill="#fff"/><path d="M8 7.8 H11.2 V13.6 H12 V14.9 H8 V13.6 H8.8 V9.1 H8Z" fill="#fff"/></svg>
<div class="t" style="top:742px;font-size:16px;right:200px;text-align:right;transform:scaleX(0.862);transform-origin:100% 0;">647.74</div>
<div class="a" style="left:578px;top:738px;width:185px;height:26px;box-sizing:border-box;border:1px solid #b8b9bd"></div>
<div class="t" style="top:742px;font-size:16px;right:12px;text-align:right;transform:scaleX(0.862);transform-origin:100% 0;">3,469.35</div>
<div class="a" style="left:767px;top:738px;width:185px;height:26px;box-sizing:border-box;border:1px solid #b8b9bd"></div>
</body></html>
